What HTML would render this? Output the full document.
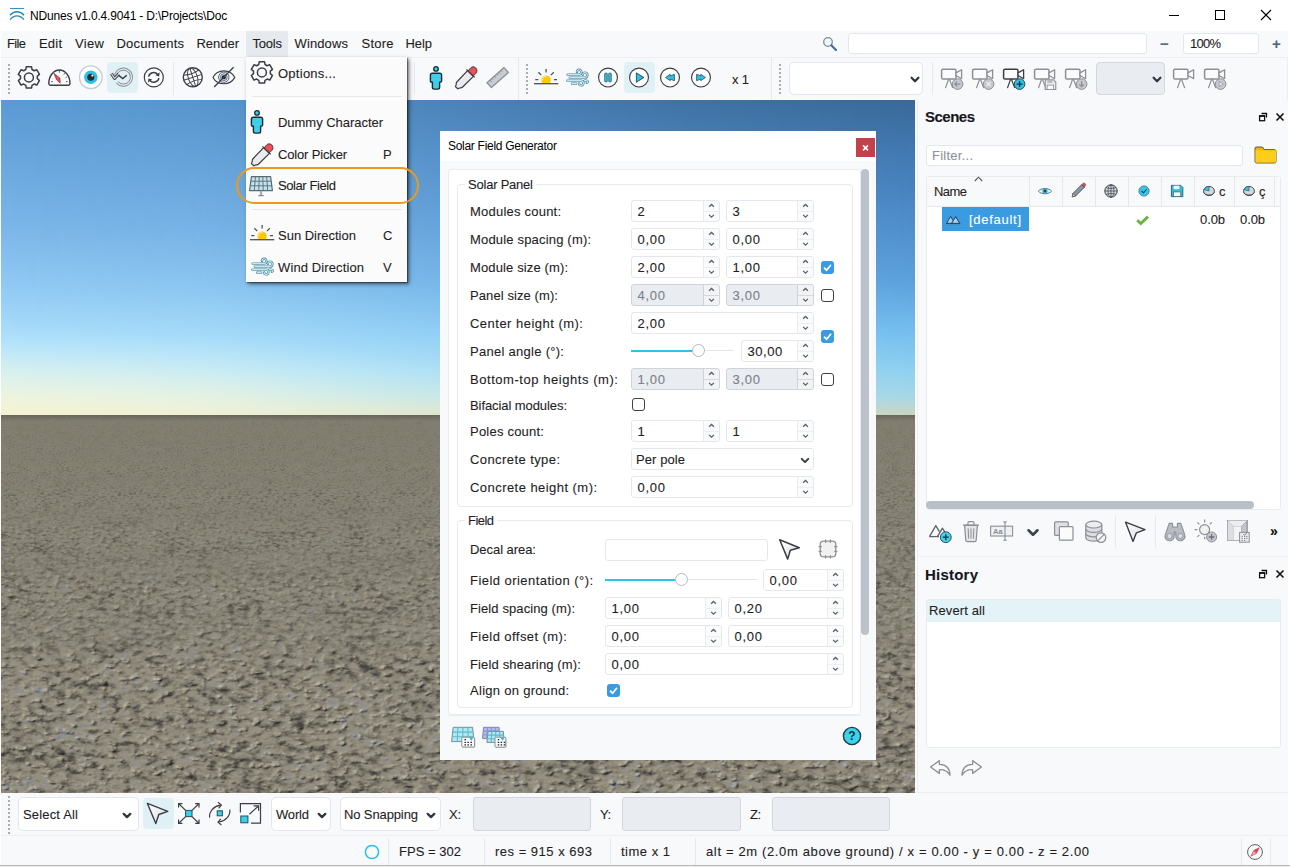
<!DOCTYPE html>
<html><head><meta charset="utf-8"><title>NDunes</title>
<style>
html,body{margin:0;padding:0;overflow:hidden;}
body{width:1290px;height:867px;position:relative;overflow:hidden;background:#ffffff;
  font-family:"Liberation Sans",sans-serif;font-size:13px;color:#1e1e24;}
.t{position:absolute;white-space:pre;line-height:20px;height:20px;-webkit-text-stroke:0.1px currentColor;}
.inp{position:absolute;box-sizing:border-box;background:#fff;border:1px solid #e4e7eb;border-radius:3px;}
.inp.dis{background:#e9ecf0;border-color:#cfd4da;}
.sep{position:absolute;width:1px;background:#e6e8ec;}
.dots{position:absolute;width:2px;background-image:repeating-linear-gradient(to bottom,#a9acb4 0,#a9acb4 2px,transparent 2px,transparent 4px);}
.inp.big{border-radius:5px;border-color:#e3e6ee;}

</style></head>
<body>
<div id="vp" style="position:absolute;left:1px;top:100px;width:914px;height:693px;overflow:hidden;background:#86bfee;">
<div style="position:absolute;left:0;top:0;width:914px;height:315px;background:linear-gradient(to bottom,#5b9ad3 0px,#69a7dd 60px,#7cb7e9 130px,#92cbf4 190px,#aee0fb 240px,#c8edf8 272px,#dff2e8 295px,#edf2d8 308px,#eeeed0 315px);"></div>
<div style="position:absolute;left:0;top:0;width:914px;height:315px;background:linear-gradient(to bottom,#396898 0px,#4178b0 50px,#4a86c3 100px,#5ba0dc 180px,#73bdee 230px,#8fd0f0 270px,#a8d7e4 298px,#c0d6cb 310px,#c8d4c0 315px);-webkit-mask-image:linear-gradient(to right,rgba(0,0,0,0) 0px,rgba(0,0,0,0.10) 200px,rgba(0,0,0,0.45) 440px,rgba(0,0,0,0.8) 680px,#000 914px);mask-image:linear-gradient(to right,rgba(0,0,0,0) 0px,rgba(0,0,0,0.10) 200px,rgba(0,0,0,0.45) 440px,rgba(0,0,0,0.8) 680px,#000 914px);"></div>
<div style="position:absolute;left:0;top:0;width:914px;height:315px;background:radial-gradient(ellipse 620px 95px at -50px 322px,rgba(248,243,210,0.85) 0%,rgba(242,245,222,0.45) 45%,rgba(232,245,238,0.15) 75%,rgba(225,244,245,0) 100%);"></div>
<div style="position:absolute;left:0;top:314.5px;width:914px;height:380px;background:linear-gradient(to bottom,#6f6d60 0px,#7b786a 6px,#807c6d 60px,#857f70 200px,#88806f 380px);"></div>
<svg style="position:absolute;left:0;top:314.5px;" width="914" height="8.0"><filter id="gf0" x="0" y="0" width="100%" height="100%" color-interpolation-filters="sRGB"><feTurbulence type="fractalNoise" baseFrequency="0.900 0.950" numOctaves="3" seed="7" result="t1"/><feComponentTransfer in="t1" result="bump"><feFuncA type="table" tableValues="0 0 0 0 0 0.03 0.14 0.42 0.78 1 1"/></feComponentTransfer><feDiffuseLighting in="bump" surfaceScale="0.02" diffuseConstant="1" lighting-color="#ffffff" result="lit"><feDistantLight azimuth="215" elevation="52"/></feDiffuseLighting><feColorMatrix in="t1" type="matrix" values="1 0 0 0 0  1 0 0 0 0  1 0 0 0 0  0 0 0 0 1" result="a"/><feTurbulence type="fractalNoise" baseFrequency="0.1800 0.1900" numOctaves="2" seed="40"/><feColorMatrix type="matrix" values="1 0 0 0 0  1 0 0 0 0  1 0 0 0 0  0 0 0 0 1" result="b"/><feComposite in="a" in2="b" operator="arithmetic" k1="0" k2="0.78" k3="0.36" k4="-0.07"/><feComponentTransfer result="col"><feFuncR type="table" tableValues="0.470 0.470 0.472 0.482 0.497 0.506 0.510 0.507 0.501 0.500 0.500"/><feFuncG type="table" tableValues="0.460 0.460 0.462 0.472 0.486 0.494 0.499 0.498 0.495 0.494 0.494"/><feFuncB type="table" tableValues="0.409 0.409 0.411 0.419 0.432 0.438 0.443 0.447 0.449 0.450 0.450"/></feComponentTransfer><feComposite in="col" in2="lit" operator="arithmetic" k1="1.27" k2="0" k3="0" k4="0"/></filter><rect width="914" height="8.0" filter="url(#gf0)"/></svg>
<svg style="position:absolute;left:0;top:317.0px;-webkit-mask-image:linear-gradient(to bottom,transparent 0%,#000 35.5%);mask-image:linear-gradient(to bottom,transparent 0%,#000 35.5%);" width="914" height="15.5"><filter id="gf1" x="0" y="0" width="100%" height="100%" color-interpolation-filters="sRGB"><feTurbulence type="fractalNoise" baseFrequency="0.900 0.950" numOctaves="3" seed="10" result="t1"/><feComponentTransfer in="t1" result="bump"><feFuncA type="table" tableValues="0 0 0 0 0 0.03 0.14 0.42 0.78 1 1"/></feComponentTransfer><feDiffuseLighting in="bump" surfaceScale="0.03" diffuseConstant="1" lighting-color="#ffffff" result="lit"><feDistantLight azimuth="215" elevation="52"/></feDiffuseLighting><feColorMatrix in="t1" type="matrix" values="1 0 0 0 0  1 0 0 0 0  1 0 0 0 0  0 0 0 0 1" result="a"/><feTurbulence type="fractalNoise" baseFrequency="0.1800 0.1900" numOctaves="2" seed="41"/><feColorMatrix type="matrix" values="1 0 0 0 0  1 0 0 0 0  1 0 0 0 0  0 0 0 0 1" result="b"/><feComposite in="a" in2="b" operator="arithmetic" k1="0" k2="0.78" k3="0.36" k4="-0.07"/><feComponentTransfer result="col"><feFuncR type="table" tableValues="0.458 0.458 0.462 0.475 0.495 0.507 0.513 0.509 0.501 0.499 0.499"/><feFuncG type="table" tableValues="0.449 0.449 0.452 0.465 0.484 0.496 0.501 0.500 0.496 0.496 0.496"/><feFuncB type="table" tableValues="0.399 0.399 0.402 0.414 0.431 0.439 0.445 0.451 0.453 0.456 0.456"/></feComponentTransfer><feComposite in="col" in2="lit" operator="arithmetic" k1="1.27" k2="0" k3="0" k4="0"/></filter><rect width="914" height="15.5" filter="url(#gf1)"/></svg>
<svg style="position:absolute;left:0;top:324.8px;-webkit-mask-image:linear-gradient(to bottom,transparent 0%,#000 35.5%);mask-image:linear-gradient(to bottom,transparent 0%,#000 35.5%);" width="914" height="21.7"><filter id="gf2" x="0" y="0" width="100%" height="100%" color-interpolation-filters="sRGB"><feTurbulence type="fractalNoise" baseFrequency="0.857 0.950" numOctaves="3" seed="13" result="t1"/><feComponentTransfer in="t1" result="bump"><feFuncA type="table" tableValues="0 0 0 0 0 0.03 0.14 0.42 0.78 1 1"/></feComponentTransfer><feDiffuseLighting in="bump" surfaceScale="0.03" diffuseConstant="1" lighting-color="#ffffff" result="lit"><feDistantLight azimuth="215" elevation="52"/></feDiffuseLighting><feColorMatrix in="t1" type="matrix" values="1 0 0 0 0  1 0 0 0 0  1 0 0 0 0  0 0 0 0 1" result="a"/><feTurbulence type="fractalNoise" baseFrequency="0.1714 0.1900" numOctaves="2" seed="42"/><feColorMatrix type="matrix" values="1 0 0 0 0  1 0 0 0 0  1 0 0 0 0  0 0 0 0 1" result="b"/><feComposite in="a" in2="b" operator="arithmetic" k1="0" k2="0.78" k3="0.36" k4="-0.07"/><feComponentTransfer result="col"><feFuncR type="table" tableValues="0.446 0.446 0.450 0.467 0.493 0.509 0.516 0.511 0.502 0.499 0.499"/><feFuncG type="table" tableValues="0.436 0.436 0.440 0.457 0.482 0.497 0.504 0.503 0.498 0.497 0.497"/><feFuncB type="table" tableValues="0.388 0.388 0.392 0.407 0.429 0.441 0.448 0.456 0.459 0.462 0.462"/></feComponentTransfer><feComposite in="col" in2="lit" operator="arithmetic" k1="1.27" k2="0" k3="0" k4="0"/></filter><rect width="914" height="21.7" filter="url(#gf2)"/></svg>
<svg style="position:absolute;left:0;top:335.5px;-webkit-mask-image:linear-gradient(to bottom,transparent 0%,#000 35.5%);mask-image:linear-gradient(to bottom,transparent 0%,#000 35.5%);" width="914" height="31.0"><filter id="gf3" x="0" y="0" width="100%" height="100%" color-interpolation-filters="sRGB"><feTurbulence type="fractalNoise" baseFrequency="0.577 0.950" numOctaves="3" seed="16" result="t1"/><feComponentTransfer in="t1" result="bump"><feFuncA type="table" tableValues="0 0 0 0 0 0.03 0.14 0.42 0.78 1 1"/></feComponentTransfer><feDiffuseLighting in="bump" surfaceScale="0.06" diffuseConstant="1" lighting-color="#ffffff" result="lit"><feDistantLight azimuth="215" elevation="52"/></feDiffuseLighting><feColorMatrix in="t1" type="matrix" values="1 0 0 0 0  1 0 0 0 0  1 0 0 0 0  0 0 0 0 1" result="a"/><feTurbulence type="fractalNoise" baseFrequency="0.1154 0.1900" numOctaves="2" seed="43"/><feColorMatrix type="matrix" values="1 0 0 0 0  1 0 0 0 0  1 0 0 0 0  0 0 0 0 1" result="b"/><feComposite in="a" in2="b" operator="arithmetic" k1="0" k2="0.78" k3="0.36" k4="-0.07"/><feComponentTransfer result="col"><feFuncR type="table" tableValues="0.431 0.431 0.436 0.458 0.492 0.512 0.521 0.515 0.502 0.498 0.498"/><feFuncG type="table" tableValues="0.421 0.421 0.426 0.448 0.480 0.499 0.509 0.507 0.501 0.499 0.499"/><feFuncB type="table" tableValues="0.375 0.375 0.380 0.399 0.428 0.443 0.452 0.462 0.466 0.470 0.470"/></feComponentTransfer><feComposite in="col" in2="lit" operator="arithmetic" k1="1.27" k2="0" k3="0" k4="0"/></filter><rect width="914" height="31.0" filter="url(#gf3)"/></svg>
<svg style="position:absolute;left:0;top:351.1px;-webkit-mask-image:linear-gradient(to bottom,transparent 0%,#000 35.5%);mask-image:linear-gradient(to bottom,transparent 0%,#000 35.5%);" width="914" height="43.4"><filter id="gf4" x="0" y="0" width="100%" height="100%" color-interpolation-filters="sRGB"><feTurbulence type="fractalNoise" baseFrequency="0.395 0.931" numOctaves="3" seed="19" result="t1"/><feComponentTransfer in="t1" result="bump"><feFuncA type="table" tableValues="0 0 0 0 0 0.03 0.14 0.42 0.78 1 1"/></feComponentTransfer><feDiffuseLighting in="bump" surfaceScale="0.10" diffuseConstant="1" lighting-color="#ffffff" result="lit"><feDistantLight azimuth="215" elevation="52"/></feDiffuseLighting><feColorMatrix in="t1" type="matrix" values="1 0 0 0 0  1 0 0 0 0  1 0 0 0 0  0 0 0 0 1" result="a"/><feTurbulence type="fractalNoise" baseFrequency="0.0789 0.1863" numOctaves="2" seed="44"/><feColorMatrix type="matrix" values="1 0 0 0 0  1 0 0 0 0  1 0 0 0 0  0 0 0 0 1" result="b"/><feComposite in="a" in2="b" operator="arithmetic" k1="0" k2="0.78" k3="0.36" k4="-0.07"/><feComponentTransfer result="col"><feFuncR type="table" tableValues="0.411 0.411 0.418 0.446 0.490 0.516 0.528 0.519 0.504 0.498 0.498"/><feFuncG type="table" tableValues="0.401 0.401 0.408 0.436 0.478 0.502 0.514 0.513 0.504 0.502 0.502"/><feFuncB type="table" tableValues="0.358 0.358 0.365 0.390 0.426 0.445 0.458 0.470 0.475 0.480 0.480"/></feComponentTransfer><feComposite in="col" in2="lit" operator="arithmetic" k1="1.27" k2="0" k3="0" k4="0"/></filter><rect width="914" height="43.4" filter="url(#gf4)"/></svg>
<svg style="position:absolute;left:0;top:372.5px;-webkit-mask-image:linear-gradient(to bottom,transparent 0%,#000 35.5%);mask-image:linear-gradient(to bottom,transparent 0%,#000 35.5%);" width="914" height="62.0"><filter id="gf5" x="0" y="0" width="100%" height="100%" color-interpolation-filters="sRGB"><feTurbulence type="fractalNoise" baseFrequency="0.273 0.595" numOctaves="3" seed="22" result="t1"/><feComponentTransfer in="t1" result="bump"><feFuncA type="table" tableValues="0 0 0 0 0 0.03 0.14 0.42 0.78 1 1"/></feComponentTransfer><feDiffuseLighting in="bump" surfaceScale="0.18" diffuseConstant="1" lighting-color="#ffffff" result="lit"><feDistantLight azimuth="215" elevation="52"/></feDiffuseLighting><feColorMatrix in="t1" type="matrix" values="1 0 0 0 0  1 0 0 0 0  1 0 0 0 0  0 0 0 0 1" result="a"/><feTurbulence type="fractalNoise" baseFrequency="0.0545 0.1189" numOctaves="2" seed="45"/><feColorMatrix type="matrix" values="1 0 0 0 0  1 0 0 0 0  1 0 0 0 0  0 0 0 0 1" result="b"/><feComposite in="a" in2="b" operator="arithmetic" k1="0" k2="0.78" k3="0.36" k4="-0.07"/><feComponentTransfer result="col"><feFuncR type="table" tableValues="0.386 0.386 0.395 0.431 0.487 0.521 0.537 0.526 0.505 0.499 0.499"/><feFuncG type="table" tableValues="0.376 0.376 0.385 0.421 0.475 0.506 0.522 0.520 0.509 0.506 0.506"/><feFuncB type="table" tableValues="0.337 0.337 0.346 0.377 0.424 0.449 0.465 0.481 0.488 0.494 0.494"/></feComponentTransfer><feComposite in="col" in2="lit" operator="arithmetic" k1="1.27" k2="0" k3="0" k4="0"/></filter><rect width="914" height="62.0" filter="url(#gf5)"/></svg>
<svg style="position:absolute;left:0;top:404.2px;-webkit-mask-image:linear-gradient(to bottom,transparent 0%,#000 35.5%);mask-image:linear-gradient(to bottom,transparent 0%,#000 35.5%);" width="914" height="85.2"><filter id="gf6" x="0" y="0" width="100%" height="100%" color-interpolation-filters="sRGB"><feTurbulence type="fractalNoise" baseFrequency="0.190 0.390" numOctaves="3" seed="25" result="t1"/><feComponentTransfer in="t1" result="bump"><feFuncA type="table" tableValues="0 0 0 0 0 0.03 0.14 0.42 0.78 1 1"/></feComponentTransfer><feDiffuseLighting in="bump" surfaceScale="0.32" diffuseConstant="1" lighting-color="#ffffff" result="lit"><feDistantLight azimuth="215" elevation="52"/></feDiffuseLighting><feColorMatrix in="t1" type="matrix" values="1 0 0 0 0  1 0 0 0 0  1 0 0 0 0  0 0 0 0 1" result="a"/><feTurbulence type="fractalNoise" baseFrequency="0.0381 0.0780" numOctaves="2" seed="46"/><feColorMatrix type="matrix" values="1 0 0 0 0  1 0 0 0 0  1 0 0 0 0  0 0 0 0 1" result="b"/><feComposite in="a" in2="b" operator="arithmetic" k1="0" k2="0.78" k3="0.36" k4="-0.07"/><feComponentTransfer result="col"><feFuncR type="table" tableValues="0.355 0.355 0.366 0.413 0.485 0.529 0.549 0.535 0.509 0.500 0.500"/><feFuncG type="table" tableValues="0.344 0.344 0.356 0.402 0.472 0.512 0.533 0.530 0.515 0.512 0.512"/><feFuncB type="table" tableValues="0.309 0.309 0.321 0.362 0.423 0.455 0.475 0.495 0.504 0.513 0.513"/></feComponentTransfer><feComposite in="col" in2="lit" operator="arithmetic" k1="1.27" k2="0" k3="0" k4="0"/></filter><rect width="914" height="85.2" filter="url(#gf6)"/></svg>
<svg style="position:absolute;left:0;top:445.5px;-webkit-mask-image:linear-gradient(to bottom,transparent 0%,#000 35.5%);mask-image:linear-gradient(to bottom,transparent 0%,#000 35.5%);" width="914" height="124.0"><filter id="gf7" x="0" y="0" width="100%" height="100%" color-interpolation-filters="sRGB"><feTurbulence type="fractalNoise" baseFrequency="0.133 0.260" numOctaves="3" seed="28" result="t1"/><feComponentTransfer in="t1" result="bump"><feFuncA type="table" tableValues="0 0 0 0 0 0.03 0.14 0.42 0.78 1 1"/></feComponentTransfer><feDiffuseLighting in="bump" surfaceScale="0.59" diffuseConstant="1" lighting-color="#ffffff" result="lit"><feDistantLight azimuth="215" elevation="52"/></feDiffuseLighting><feColorMatrix in="t1" type="matrix" values="1 0 0 0 0  1 0 0 0 0  1 0 0 0 0  0 0 0 0 1" result="a"/><feTurbulence type="fractalNoise" baseFrequency="0.0267 0.0520" numOctaves="2" seed="47"/><feColorMatrix type="matrix" values="1 0 0 0 0  1 0 0 0 0  1 0 0 0 0  0 0 0 0 1" result="b"/><feComposite in="a" in2="b" operator="arithmetic" k1="0" k2="0.78" k3="0.36" k4="-0.07"/><feComponentTransfer result="col"><feFuncR type="table" tableValues="0.314 0.314 0.329 0.389 0.483 0.540 0.566 0.547 0.514 0.502 0.502"/><feFuncG type="table" tableValues="0.303 0.303 0.318 0.378 0.468 0.521 0.547 0.543 0.525 0.521 0.521"/><feFuncB type="table" tableValues="0.274 0.274 0.289 0.342 0.421 0.462 0.489 0.515 0.526 0.537 0.537"/></feComponentTransfer><feComposite in="col" in2="lit" operator="arithmetic" k1="1.27" k2="0" k3="0" k4="0"/></filter><rect width="914" height="124.0" filter="url(#gf7)"/></svg>
<svg style="position:absolute;left:0;top:500.8px;-webkit-mask-image:linear-gradient(to bottom,transparent 0%,#000 35.5%);mask-image:linear-gradient(to bottom,transparent 0%,#000 35.5%);" width="914" height="193.8"><filter id="gf8" x="0" y="0" width="100%" height="100%" color-interpolation-filters="sRGB"><feTurbulence type="fractalNoise" baseFrequency="0.092 0.172" numOctaves="3" seed="31" result="t1"/><feComponentTransfer in="t1" result="bump"><feFuncA type="table" tableValues="0 0 0 0 0 0.03 0.14 0.42 0.78 1 1"/></feComponentTransfer><feDiffuseLighting in="bump" surfaceScale="1.12" diffuseConstant="1" lighting-color="#ffffff" result="lit"><feDistantLight azimuth="215" elevation="52"/></feDiffuseLighting><feColorMatrix in="t1" type="matrix" values="1 0 0 0 0  1 0 0 0 0  1 0 0 0 0  0 0 0 0 1" result="a"/><feTurbulence type="fractalNoise" baseFrequency="0.0183 0.0344" numOctaves="2" seed="48"/><feColorMatrix type="matrix" values="1 0 0 0 0  1 0 0 0 0  1 0 0 0 0  0 0 0 0 1" result="b"/><feComposite in="a" in2="b" operator="arithmetic" k1="0" k2="0.78" k3="0.36" k4="-0.07"/><feComponentTransfer result="col"><feFuncR type="table" tableValues="0.258 0.258 0.278 0.358 0.482 0.557 0.591 0.567 0.522 0.507 0.507"/><feFuncG type="table" tableValues="0.245 0.245 0.265 0.345 0.464 0.534 0.568 0.564 0.539 0.534 0.534"/><feFuncB type="table" tableValues="0.225 0.225 0.245 0.315 0.419 0.474 0.509 0.543 0.558 0.573 0.573"/></feComponentTransfer><feComposite in="col" in2="lit" operator="arithmetic" k1="1.27" k2="0" k3="0" k4="0"/></filter><rect width="914" height="193.8" filter="url(#gf8)"/></svg>
<div style="position:absolute;left:0;top:314.5px;width:914px;height:6px;background:linear-gradient(to bottom,rgba(70,68,58,0.42),rgba(70,68,58,0));"></div>
</div>
<div style="position:absolute;left:0px;top:0px;width:1290px;height:31px;background:#fff;"></div>
<svg style="position:absolute;left:9px;top:7px;" width="16" height="14" viewBox="0 0 16 14"><path d="M1 1.5H15" stroke="#3b8fb8" stroke-width="1.1" fill="none"/><path d="M1 8.2C5 3.6 11 3.6 15 8.2" stroke="#2e86b5" stroke-width="1.3" fill="none"/><path d="M1 12.6C5 7.6 11 7.6 15 12.6" stroke="#2e86b5" stroke-width="1.3" fill="none"/></svg>
<span class="t" style="left:30px;top:5.5px;font-size:12px;letter-spacing:-0.18px;color:#000;-webkit-text-stroke:0;">NDunes v1.0.4.9041 - D:\Projects\Doc</span>
<svg style="position:absolute;left:1168px;top:9px;" width="12" height="12" viewBox="0 0 12 12"><path d="M1 6.5H11" stroke="#000" stroke-width="1"/></svg>
<svg style="position:absolute;left:1214px;top:9px;" width="12" height="12" viewBox="0 0 12 12"><rect x="1.5" y="1.5" width="9" height="9" fill="none" stroke="#000" stroke-width="1"/></svg>
<svg style="position:absolute;left:1260px;top:9px;" width="12" height="12" viewBox="0 0 12 12"><path d="M1 1L11 11M11 1L1 11" stroke="#000" stroke-width="1.1"/></svg>
<div style="position:absolute;left:0px;top:31px;width:1290px;height:26px;background:#f8f9fa;"></div>
<div style="position:absolute;left:246px;top:31px;width:42px;height:26px;background:#e6eaef;"></div>
<span class="t" style="left:7px;top:34.0px;font-size:13px;letter-spacing:-0.65px;color:#1e1e24;">File</span>
<span class="t" style="left:39px;top:34.0px;font-size:13px;letter-spacing:0.20px;color:#1e1e24;">Edit</span>
<span class="t" style="left:75px;top:34.0px;font-size:13px;letter-spacing:0.35px;color:#1e1e24;">View</span>
<span class="t" style="left:116.5px;top:34.0px;font-size:13px;letter-spacing:0.22px;color:#1e1e24;">Documents</span>
<span class="t" style="left:196.5px;top:34.0px;font-size:13px;letter-spacing:-0.03px;color:#1e1e24;">Render</span>
<span class="t" style="left:252.5px;top:34.0px;font-size:13px;letter-spacing:-0.21px;color:#1e1e24;">Tools</span>
<span class="t" style="left:294.5px;top:34.0px;font-size:13px;letter-spacing:0.12px;color:#1e1e24;">Windows</span>
<span class="t" style="left:361.5px;top:34.0px;font-size:13px;letter-spacing:0.23px;color:#1e1e24;">Store</span>
<span class="t" style="left:405.5px;top:34.0px;font-size:13px;letter-spacing:-0.08px;color:#1e1e24;">Help</span>
<svg style="position:absolute;left:821px;top:35px;" width="18" height="18" viewBox="0 0 18 18"><circle cx="7" cy="7" r="4.3" fill="#eef6fb" stroke="#7d8a99" stroke-width="1.3"/><path d="M10.3 10.3L15 15" stroke="#3f6f9c" stroke-width="2.2" stroke-linecap="round"/></svg>
<div class="inp" style="position:absolute;left:848px;top:33px;width:299px;height:21px;"></div>
<span class="t" style="left:1160px;top:33.5px;font-size:15px;letter-spacing:0.00px;color:#5b6778;font-weight:bold;">−</span>
<div class="inp" style="position:absolute;left:1183px;top:33px;width:76px;height:21px;"></div>
<span class="t" style="left:1190px;top:34.0px;font-size:13px;letter-spacing:-0.76px;color:#1e1e24;">100%</span>
<span class="t" style="left:1272px;top:33.5px;font-size:15px;letter-spacing:0.00px;color:#4e6584;font-weight:bold;">+</span>
<div style="position:absolute;left:0px;top:57px;width:1290px;height:43px;background:#f8f9fa;border-top:1px solid #eceef1;box-sizing:border-box;"></div>
<div class="dots" style="position:absolute;left:8px;top:64px;width:2px;height:30px;"></div>
<div style="position:absolute;left:107px;top:62px;width:31px;height:31px;background:#e0f1f6;border-radius:4px;"></div>
<svg style="position:absolute;left:12.0px;top:61.0px;overflow:visible" width="32" height="32" viewBox="0 0 32 32"><g transform="translate(0.9 0.4)"><path d="M12.89 8.09L13.39 5.32L18.61 5.32L19.11 8.09L21.29 9.35L23.95 8.39L26.56 12.92L24.41 14.74L24.41 17.26L26.56 19.08L23.95 23.61L21.29 22.65L19.11 23.91L18.61 26.68L13.39 26.68L12.89 23.91L10.71 22.65L8.05 23.61L5.44 19.08L7.59 17.26L7.59 14.74L5.44 12.92L8.05 8.39L10.71 9.35Z" fill="none" stroke="#3a3e47" stroke-width="1.5" stroke-linejoin="round"/><circle cx="16" cy="16" r="4.5" fill="none" stroke="#3a3e47" stroke-width="1.5"/></g></svg>
<svg style="position:absolute;left:43.0px;top:61.0px;overflow:visible" width="32" height="32" viewBox="0 0 32 32"><path d="M7.4 24.2C6.4 24.2 5.8 23.6 5.8 22.6C5.8 15 10.4 9 16.4 9C22.4 9 27 15 27 22.6C27 23.6 26.4 24.2 25.4 24.2Z" fill="#fbfbfb" stroke="#3a3e47" stroke-width="1.4" stroke-linejoin="round"/><path d="M10.8 12.2L13.6 18.8L17.2 22.2L17 17.2Z" fill="#ee4a52" stroke="#5a2a30" stroke-width="0.6" stroke-linejoin="round"/><path d="M16.4 9.8V11.6M8.2 20.6H9.8M24.6 20.6H23M21.6 12.2L20.8 13.6M23.8 16L22.6 16.8" stroke="#3a3e47" stroke-width="0.9"/></svg>
<svg style="position:absolute;left:74.0px;top:61.0px;overflow:visible" width="32" height="32" viewBox="0 0 32 32"><circle cx="16.8" cy="16.2" r="11.3" fill="#fff" stroke="#c6c9d6" stroke-width="1.3"/><circle cx="16.8" cy="16.2" r="6.7" fill="#2cc3e4"/><circle cx="16.8" cy="16.2" r="3.5" fill="#2a2c33"/><circle cx="18.4" cy="14.6" r="1.05" fill="#fff"/></svg>
<svg style="position:absolute;left:106.0px;top:61.0px;overflow:visible" width="32" height="32" viewBox="0 0 32 32"><path d="M9.6 14.4A8 8 0 1 1 11.2 21.2" fill="none" stroke="#8b8f97" stroke-width="3.1"/><path d="M9.6 14.4A8 8 0 1 1 11.2 21.2" fill="none" stroke="#e6e8eb" stroke-width="1.2"/><path d="M12.6 14.4L16.8 17.6L20.8 14.2" fill="none" stroke="#3a3e47" stroke-width="1.5"/><path d="M5.4 12.6L8.6 17.4L12.6 13" fill="none" stroke="#3a3e47" stroke-width="3" stroke-linejoin="round"/><path d="M5.4 12.6L8.6 17.4L12.6 13" fill="none" stroke="#dfe1e5" stroke-width="1.1" stroke-linejoin="round"/></svg>
<svg style="position:absolute;left:137.0px;top:61.0px;overflow:visible" width="32" height="32" viewBox="0 0 32 32"><circle cx="16.8" cy="16.4" r="9.5" fill="#fdfdfd" stroke="#3a3e47" stroke-width="1.2"/><path d="M11.6 15.6A5.2 5.2 0 0 1 20.6 13.4" fill="none" stroke="#3a3e47" stroke-width="1.5"/><path d="M22 17.2A5.2 5.2 0 0 1 13 19.4" fill="none" stroke="#3a3e47" stroke-width="1.5"/><path d="M22.6 11.2L22.2 15.4L18.4 14.2Z" fill="#3a3e47"/><path d="M11 21.6L11.4 17.4L15.2 18.6Z" fill="#3a3e47"/></svg>
<div class="sep" style="left:173px;top:62px;height:33px;"></div>
<svg style="position:absolute;left:176.0px;top:61.0px;overflow:visible" width="32" height="32" viewBox="0 0 32 32"><circle cx="16.8" cy="16.3" r="9.5" fill="#fbfbfb" stroke="#3a3e47" stroke-width="1.4"/><g transform="rotate(-18 16.8 16.3)"><ellipse cx="16.8" cy="16.3" rx="4.6" ry="9.5" fill="none" stroke="#3a3e47" stroke-width="0.95"/><path d="M16.8 6.8V25.8M7.3 16.3H26.3M8.8 11.2C13 13 20.6 13 24.8 11.2M8.8 21.4C13 19.6 20.6 19.6 24.8 21.4" fill="none" stroke="#3a3e47" stroke-width="0.95"/></g></svg>
<svg style="position:absolute;left:207.0px;top:61.0px;overflow:visible" width="32" height="32" viewBox="0 0 32 32"><path d="M6 16.4C10.4 7.6 23.2 7.6 27.8 16.4C23.2 24.8 10.4 24.8 6 16.4Z" fill="#fbfbfb" stroke="#3a3e47" stroke-width="1.15"/><circle cx="16.8" cy="16.2" r="5.2" fill="#f1f2f5" stroke="#5a6072" stroke-width="1"/><circle cx="16.8" cy="16.2" r="3.4" fill="#cfd3dd" stroke="#5a6072" stroke-width="0.8"/><circle cx="16.8" cy="16.2" r="2" fill="#15182a"/><path d="M7.2 26L26.6 6.2" stroke="#3a3e47" stroke-width="1.3"/></svg>
<div class="sep" style="left:414px;top:62px;height:33px;"></div>
<svg style="position:absolute;left:420.0px;top:61.0px;overflow:visible" width="32" height="32" viewBox="0 0 32 32"><g transform="translate(0 1.3)"><circle cx="16" cy="6.6" r="2.3" fill="#3ecfe9" stroke="#1d2a33" stroke-width="1.3"/><path d="M10.4 12.8C10.4 11.6 11.2 10.9 12.4 10.9H19.6C20.8 10.9 21.6 11.6 21.6 12.8V18.6C21.6 19.6 20.8 20 19.6 20V25C19.6 26.2 18.8 26.8 17.8 26.8H14.2C13.2 26.8 12.4 26.2 12.4 25V20C11.2 20 10.4 19.6 10.4 18.6Z" fill="#3ecfe9" stroke="#1d2a33" stroke-width="1.4" stroke-linejoin="round"/></g></svg>
<svg style="position:absolute;left:450.0px;top:61.0px;overflow:visible" width="32" height="32" viewBox="0 0 32 32"><g transform="translate(0 1)"><path d="M17.6 8.6L23.4 14.4L12.4 25.2C11.4 26.2 9.4 25.4 7.8 26.8L5.4 24.6C6.8 22.8 5.8 21 6.8 20Z" fill="#e9ebef" stroke="#3a3e47" stroke-width="1.2" stroke-linejoin="round"/><path d="M18 9.2L23 14.2L25.8 11.4C27.4 9.8 27.2 7.4 25.8 6C24.4 4.6 22 4.4 20.6 6Z" fill="#ee5058" stroke="#4a3136" stroke-width="1" stroke-linejoin="round"/><path d="M16.4 7.4L24.8 15.4" stroke="#3a3e47" stroke-width="1.2"/></g></svg>
<svg style="position:absolute;left:481.0px;top:61.0px;overflow:visible" width="32" height="32" viewBox="0 0 32 32"><g transform="translate(0.6 0.6)"><path d="M5.4 21.2L22.4 6L26.8 10.8L9.8 26Z" fill="#c9ccd2" stroke="#8b8f97" stroke-width="1.3" stroke-linejoin="round"/><path d="M8.6 18.6L10.2 20.4M10.8 16.6L12 18M13 14.6L14.6 16.4M15.2 12.6L16.4 14M17.4 10.8L19 12.6M19.6 8.8L20.8 10.2" stroke="#8b8f97" stroke-width="0.9"/></g></svg>
<div class="sep" style="left:518px;top:58px;height:42px;"></div>
<div class="dots" style="position:absolute;left:526px;top:64px;width:2px;height:30px;"></div>
<svg style="position:absolute;left:530.0px;top:61.0px;overflow:visible" width="32" height="32" viewBox="0 0 32 32"><clipPath id="sunclip1"><rect x="0" y="0" width="32" height="21.9"/></clipPath><circle cx="16.1" cy="19.1" r="4.7" fill="#ffc800" clip-path="url(#sunclip1)"/><path d="M12.6 19.6A3.6 3.6 0 0 1 16.6 15.4" fill="none" stroke="#ffe27a" stroke-width="1.1" clip-path="url(#sunclip1)"/><path d="M4 22.7H28.3" stroke="#4c5059" stroke-width="1.3"/><path d="M16.1 8V11.6M8.4 11.3L11.3 14.1M23.8 11.3L20.9 14.1M5.3 18.7H8.4M23.9 18.7H27" stroke="#4c5059" stroke-width="1.3"/></svg>
<svg style="position:absolute;left:561.0px;top:61.0px;overflow:visible" width="32" height="32" viewBox="0 0 32 32"><path d="M6.6 13.6H17.8C21 13.6 21.2 8.8 18.2 8.8C16.6 8.8 15.8 10 16 11M8.8 16.6H23.6C27.2 16.6 27.2 11.6 24 11.6C22.4 11.6 21.6 12.8 21.8 13.8M6.4 19.6H20C23.2 19.6 23.2 24.4 20.2 24.4C18.6 24.4 18 23.4 18.2 22.4M11 22.6H15.2M23.4 19.6H25.4C27 19.6 27.2 21.6 25.8 21.8" fill="none" stroke="#4f8298" stroke-width="2.4" stroke-linecap="round"/><path d="M6.6 13.6H17.8C21 13.6 21.2 8.8 18.2 8.8C16.6 8.8 15.8 10 16 11M8.8 16.6H23.6C27.2 16.6 27.2 11.6 24 11.6C22.4 11.6 21.6 12.8 21.8 13.8M6.4 19.6H20C23.2 19.6 23.2 24.4 20.2 24.4C18.6 24.4 18 23.4 18.2 22.4M11 22.6H15.2M23.4 19.6H25.4C27 19.6 27.2 21.6 25.8 21.8" fill="none" stroke="#bfeaf4" stroke-width="1.1" stroke-linecap="round"/></svg>
<svg style="position:absolute;left:591.0px;top:61.0px;overflow:visible" width="32" height="32" viewBox="0 0 32 32"><g transform="translate(1 0.5)"><circle cx="16" cy="16" r="9.45" fill="#fdfdfd" stroke="#3a3e47" stroke-width="1.15"/><rect x="12.7" y="11.6" width="2.6" height="8.8" rx="0.8" fill="#2cc3e4" stroke="#34606f" stroke-width="0.8"/><rect x="16.7" y="11.6" width="2.6" height="8.8" rx="0.8" fill="#2cc3e4" stroke="#34606f" stroke-width="0.8"/></g></svg>
<div style="position:absolute;left:624px;top:62px;width:31px;height:31px;background:#e0f1f6;border-radius:4px;"></div>
<svg style="position:absolute;left:622.0px;top:61.0px;overflow:visible" width="32" height="32" viewBox="0 0 32 32"><g transform="translate(1 0.5)"><circle cx="16" cy="16" r="9.45" fill="#fdfdfd" stroke="#3a3e47" stroke-width="1.15"/><path d="M13.4 11.4L20.6 16L13.4 20.6Z" fill="#2cc3e4" stroke="#2f5f70" stroke-width="1.05" stroke-linejoin="round"/></g></svg>
<svg style="position:absolute;left:653.0px;top:61.0px;overflow:visible" width="32" height="32" viewBox="0 0 32 32"><g transform="translate(1 0.5)"><circle cx="16" cy="16" r="9.45" fill="#fdfdfd" stroke="#3a3e47" stroke-width="1.15"/><path d="M16.2 12.8L11.6 16L16.2 19.2V17.6L20.4 19.2V12.8L16.2 14.4Z" fill="#2cc3e4" stroke="#2f5f70" stroke-width="0.9" stroke-linejoin="round"/></g></svg>
<svg style="position:absolute;left:684.0px;top:61.0px;overflow:visible" width="32" height="32" viewBox="0 0 32 32"><g transform="translate(1 0.5)"><circle cx="16" cy="16" r="9.45" fill="#fdfdfd" stroke="#3a3e47" stroke-width="1.15"/><path d="M15.8 12.8L20.4 16L15.8 19.2V17.6L11.6 19.2V12.8L15.8 14.4Z" fill="#2cc3e4" stroke="#2f5f70" stroke-width="0.9" stroke-linejoin="round"/></g></svg>
<span class="t" style="left:732px;top:69.5px;font-size:13px;letter-spacing:-0.17px;color:#1e1e24;">x 1</span>
<div class="sep" style="left:771px;top:58px;height:42px;"></div>
<div class="dots" style="position:absolute;left:779px;top:64px;width:2px;height:30px;"></div>
<div class="inp big" style="position:absolute;left:789px;top:62px;width:134px;height:33px;"></div>
<svg style="position:absolute;left:907px;top:71px" width="16" height="16" viewBox="0 0 16 16"><path d="M4.6 6.8L8 10.2L11.4 6.8" fill="none" stroke="#33363f" stroke-width="2.30" stroke-linecap="round" stroke-linejoin="round"/></svg>
<div class="sep" style="left:932px;top:62px;height:33px;"></div>
<svg style="position:absolute;left:936.0px;top:61.0px;overflow:visible" width="32" height="32" viewBox="0 0 32 32"><g transform="translate(0 1.5)"><rect x="5.6" y="6.8" width="14.4" height="9.8" rx="1.4" fill="#fbfbfb" stroke="#8b8f97" stroke-width="1.5"/><path d="M20 10.4L25.6 7.2V16.2L20 13Z" fill="#fbfbfb" stroke="#8b8f97" stroke-width="1.3" stroke-linejoin="round"/><path d="M12.6 16.8L9.4 25.6M13.4 16.8L16.8 25.6" stroke="#8b8f97" stroke-width="1.2"/><circle cx="21.6" cy="21.6" r="5.3" fill="#c7c9ce" stroke="#8b8f97" stroke-width="1"/><path d="M24.4 21.6H19.2M21.2 19.2L18.8 21.6L21.2 24" fill="none" stroke="#8b8f97" stroke-width="1.2"/></g></svg>
<svg style="position:absolute;left:967.0px;top:61.0px;overflow:visible" width="32" height="32" viewBox="0 0 32 32"><g transform="translate(0 1.5)"><rect x="5.6" y="6.8" width="14.4" height="9.8" rx="1.4" fill="#fbfbfb" stroke="#8b8f97" stroke-width="1.5"/><path d="M20 10.4L25.6 7.2V16.2L20 13Z" fill="#fbfbfb" stroke="#8b8f97" stroke-width="1.3" stroke-linejoin="round"/><path d="M12.6 16.8L9.4 25.6M13.4 16.8L16.8 25.6" stroke="#8b8f97" stroke-width="1.2"/><circle cx="21.6" cy="21.6" r="5.3" fill="#c7c9ce" stroke="#8b8f97" stroke-width="1"/><path d="M19.6 19.6L23.6 23.6M23.6 19.6L19.6 23.6" stroke="#ececee" stroke-width="1.4"/></g></svg>
<svg style="position:absolute;left:998.0px;top:61.0px;overflow:visible" width="32" height="32" viewBox="0 0 32 32"><g transform="translate(0 1.5)"><rect x="5.6" y="6.8" width="14.4" height="9.8" rx="1.4" fill="#fbfbfb" stroke="#3a3e47" stroke-width="1.5"/><path d="M20 10.4L25.6 7.2V16.2L20 13Z" fill="#fbfbfb" stroke="#3a3e47" stroke-width="1.3" stroke-linejoin="round"/><path d="M12.6 16.8L9.4 25.6M13.4 16.8L16.8 25.6" stroke="#3a3e47" stroke-width="1.2"/><circle cx="21.6" cy="21.6" r="5.3" fill="#2cc3e4" stroke="#2b4c58" stroke-width="1"/><path d="M21.6 18.6V24.6M18.6 21.6H24.6" stroke="#16333d" stroke-width="1.4"/></g></svg>
<svg style="position:absolute;left:1029.0px;top:61.0px;overflow:visible" width="32" height="32" viewBox="0 0 32 32"><g transform="translate(0 1.5)"><rect x="5.6" y="6.8" width="14.4" height="9.8" rx="1.4" fill="#fbfbfb" stroke="#8b8f97" stroke-width="1.5"/><path d="M20 10.4L25.6 7.2V16.2L20 13Z" fill="#fbfbfb" stroke="#8b8f97" stroke-width="1.3" stroke-linejoin="round"/><path d="M12.6 16.8L9.4 25.6M13.4 16.8L16.8 25.6" stroke="#8b8f97" stroke-width="1.2"/><path d="M16.2 17.2H24.4L26.8 19.6V27H16.2Z" fill="#e9eaec" stroke="#8b8f97" stroke-width="1.1"/><rect x="18.4" y="17.4" width="5" height="3" fill="#b5b8be"/><rect x="18.2" y="22.6" width="6.4" height="4.4" fill="#fbfbfb" stroke="#8b8f97" stroke-width="0.8"/></g></svg>
<svg style="position:absolute;left:1060.0px;top:61.0px;overflow:visible" width="32" height="32" viewBox="0 0 32 32"><g transform="translate(0 1.5)"><rect x="5.6" y="6.8" width="14.4" height="9.8" rx="1.4" fill="#fbfbfb" stroke="#8b8f97" stroke-width="1.5"/><path d="M20 10.4L25.6 7.2V16.2L20 13Z" fill="#fbfbfb" stroke="#8b8f97" stroke-width="1.3" stroke-linejoin="round"/><path d="M12.6 16.8L9.4 25.6M13.4 16.8L16.8 25.6" stroke="#8b8f97" stroke-width="1.2"/><circle cx="21.6" cy="21.6" r="5.3" fill="#c7c9ce" stroke="#8b8f97" stroke-width="1"/><path d="M21.6 18.6V24M19.2 21.8L21.6 24.2L24 21.8" fill="none" stroke="#8b8f97" stroke-width="1.2"/></g></svg>
<div class="inp" style="position:absolute;left:1096px;top:62px;width:69px;height:33px;background:#e9ecf0;border-color:#d3d7dd;border-radius:4px;"></div>
<svg style="position:absolute;left:1149px;top:71px" width="16" height="16" viewBox="0 0 16 16"><path d="M4.6 6.8L8 10.2L11.4 6.8" fill="none" stroke="#33363f" stroke-width="2.30" stroke-linecap="round" stroke-linejoin="round"/></svg>
<svg style="position:absolute;left:1168.0px;top:61.0px;overflow:visible" width="32" height="32" viewBox="0 0 32 32"><g transform="translate(0 1.5)"><rect x="5.6" y="6.8" width="14.4" height="9.8" rx="1.4" fill="#fbfbfb" stroke="#8b8f97" stroke-width="1.5"/><path d="M20 10.4L25.6 7.2V16.2L20 13Z" fill="#fbfbfb" stroke="#8b8f97" stroke-width="1.3" stroke-linejoin="round"/><path d="M12.6 16.8L9.4 25.6M13.4 16.8L16.8 25.6" stroke="#8b8f97" stroke-width="1.2"/></g></svg>
<svg style="position:absolute;left:1199.0px;top:61.0px;overflow:visible" width="32" height="32" viewBox="0 0 32 32"><g transform="translate(0 1.5)"><rect x="5.6" y="6.8" width="14.4" height="9.8" rx="1.4" fill="#fbfbfb" stroke="#8b8f97" stroke-width="1.5"/><path d="M20 10.4L25.6 7.2V16.2L20 13Z" fill="#fbfbfb" stroke="#8b8f97" stroke-width="1.3" stroke-linejoin="round"/><path d="M12.6 16.8L9.4 25.6M13.4 16.8L16.8 25.6" stroke="#8b8f97" stroke-width="1.2"/><circle cx="21.6" cy="21.6" r="5.3" fill="#c7c9ce" stroke="#8b8f97" stroke-width="1"/><path d="M20.2 19L24.4 21.6L20.2 24.2Z" fill="#ececee" stroke="#8b8f97" stroke-width="0.7"/></g></svg>
<div style="position:absolute;left:915px;top:100px;width:375px;height:693px;background:#f8f9fa;"></div>
<div style="position:absolute;left:917px;top:100px;width:1px;height:693px;background:#eceef2;"></div>
<span class="t" style="left:925px;top:107.0px;font-size:15px;letter-spacing:-0.51px;color:#15151c;font-weight:bold;">Scenes</span>
<svg style="position:absolute;left:1258px;top:112px" width="30" height="11" viewBox="0 0 30 11"><path d="M3.5 1.5H8.5V5.5" fill="none" stroke="#111" stroke-width="1.3"/><rect x="1.6" y="4.1" width="5" height="4.6" fill="#f8f9fa" stroke="#111" stroke-width="1.3"/><path d="M1 3.9H7.2" stroke="#111" stroke-width="1.6"/><path d="M18.5 1.5L25.5 8.5M25.5 1.5L18.5 8.5" stroke="#111" stroke-width="1.6"/></svg>
<div class="inp" style="position:absolute;left:926px;top:145px;width:317px;height:21px;"></div>
<span class="t" style="left:932px;top:145.5px;font-size:13px;letter-spacing:0.25px;color:#8d929b;">Filter...</span>
<svg style="position:absolute;left:1254px;top:146px;" width="23" height="18" viewBox="0 0 23 18"><path d="M1 2.2C1 1.5 1.5 1 2.2 1H8.4L10.4 3.6H20.6C21.4 3.6 22 4.2 22 5V15.6C22 16.4 21.4 17 20.6 17H2.4C1.6 17 1 16.4 1 15.6Z" fill="#f5b400" stroke="#4a4a4a" stroke-width="0.9"/><path d="M1.5 4.2H22V15.6C22 16.3 21.4 16.6 20.6 16.6H2.4C1.8 16.6 1.5 16.2 1.5 15.6Z" fill="#ffcd1a"/></svg>
<div style="position:absolute;left:926px;top:176px;width:355px;height:334px;background:#fff;border:1px solid #e9ebef;box-sizing:border-box;border-radius:3px;"></div>
<div style="position:absolute;left:927px;top:177px;width:353px;height:30px;background:#f8f9fa;border-bottom:1px solid #e6e8ec;box-sizing:border-box;"></div>
<div style="position:absolute;left:1029px;top:177px;width:1px;height:29px;background:#e6e8ec;"></div>
<div style="position:absolute;left:1062px;top:177px;width:1px;height:29px;background:#e6e8ec;"></div>
<div style="position:absolute;left:1095px;top:177px;width:1px;height:29px;background:#e6e8ec;"></div>
<div style="position:absolute;left:1128px;top:177px;width:1px;height:29px;background:#e6e8ec;"></div>
<div style="position:absolute;left:1161px;top:177px;width:1px;height:29px;background:#e6e8ec;"></div>
<div style="position:absolute;left:1194px;top:177px;width:1px;height:29px;background:#e6e8ec;"></div>
<div style="position:absolute;left:1234px;top:177px;width:1px;height:29px;background:#e6e8ec;"></div>
<div style="position:absolute;left:1274px;top:177px;width:1px;height:29px;background:#e6e8ec;"></div>
<span class="t" style="left:934px;top:182.0px;font-size:13px;letter-spacing:-0.56px;color:#1e1e24;">Name</span>
<svg style="position:absolute;left:972px;top:175px;" width="12" height="8" viewBox="0 0 12 8"><path d="M2.8 6L6.5 2.2L10.2 6" stroke="#555" stroke-width="1.1" fill="none"/></svg>
<svg style="position:absolute;left:1029.0px;top:175.0px;overflow:visible" width="32" height="32" viewBox="0 0 32 32"><path d="M9.4 16.2C12 12.6 20 12.6 22.6 16.2C20 19.6 12 19.6 9.4 16.2Z" fill="#dff4f9" stroke="#5b6470" stroke-width="0.9"/><circle cx="16" cy="16" r="2.6" fill="#2aa9c9"/><circle cx="16" cy="16" r="1.1" fill="#1b2a33"/></svg>
<svg style="position:absolute;left:1062.0px;top:175.0px;overflow:visible" width="32" height="32" viewBox="0 0 32 32"><path d="M10.2 21.8L11 18.4L19.6 9.8L22.2 12.4L13.6 21Z" fill="#8d96a3" stroke="#4b5058" stroke-width="0.9" stroke-linejoin="round"/><path d="M19.6 9.8L20.8 8.6C21.4 8 22.4 8 23 8.6C23.8 9.4 23.8 10.2 23.2 10.8L22.2 12.4Z" fill="#e9434c" stroke="#4b5058" stroke-width="0.7"/><path d="M10.2 21.8L11 18.4L13.6 21Z" fill="#f1d9a6" stroke="#4b5058" stroke-width="0.7"/></svg>
<svg style="position:absolute;left:1095.0px;top:175.0px;overflow:visible" width="32" height="32" viewBox="0 0 32 32"><circle cx="16" cy="16" r="6.2" fill="#d9dbe0" stroke="#3a3e47" stroke-width="1"/><ellipse cx="16" cy="16" rx="3" ry="6.2" fill="none" stroke="#3a3e47" stroke-width="0.7"/><path d="M16 9.8V22.2M9.8 16H22.2M11 12.6C14 13.8 18 13.8 21 12.6M11 19.4C14 18.2 18 18.2 21 19.4" fill="none" stroke="#3a3e47" stroke-width="0.7"/></svg>
<svg style="position:absolute;left:1128.0px;top:175.0px;overflow:visible" width="32" height="32" viewBox="0 0 32 32"><circle cx="16" cy="16" r="5.1" fill="#35c7e6" stroke="#3e7f93" stroke-width="0.9"/><path d="M13.6 16L15.4 17.8L18.6 14.4" fill="none" stroke="#14505f" stroke-width="1.2"/></svg>
<svg style="position:absolute;left:1161.0px;top:175.0px;overflow:visible" width="32" height="32" viewBox="0 0 32 32"><path d="M10.4 10.4H19.8L21.8 12.4V21.6H10.4Z" fill="#39b8d6" stroke="#2b6777" stroke-width="1"/><rect x="12.6" y="10.6" width="5.8" height="3.6" fill="#e9f7fb"/><rect x="12.6" y="17" width="7" height="4.4" fill="#f2fbfd" stroke="#2b6777" stroke-width="0.6"/></svg>
<svg style="position:absolute;left:1193.0px;top:175.0px;overflow:visible" width="32" height="32" viewBox="0 0 32 32"><ellipse cx="16" cy="16" rx="5.4" ry="4.6" fill="#d4d7dc" stroke="#4c525c" stroke-width="1"/><path d="M16 16V11.4A5.4 4.6 0 0 0 10.8 14.6Z" fill="#2cc3e4" stroke="#4c525c" stroke-width="0.7"/><path d="M10.7 17.2C11.6 21 20.4 21 21.3 17.2" fill="none" stroke="#4c525c" stroke-width="1"/></svg>
<span class="t" style="left:1219px;top:182.0px;font-size:13px;letter-spacing:0.00px;color:#1e1e24;">c</span>
<svg style="position:absolute;left:1233.0px;top:175.0px;overflow:visible" width="32" height="32" viewBox="0 0 32 32"><ellipse cx="16" cy="16" rx="5.4" ry="4.6" fill="#d4d7dc" stroke="#4c525c" stroke-width="1"/><path d="M16 16V11.4A5.4 4.6 0 0 0 10.8 14.6Z" fill="#2cc3e4" stroke="#4c525c" stroke-width="0.7"/><path d="M10.7 17.2C11.6 21 20.4 21 21.3 17.2" fill="none" stroke="#4c525c" stroke-width="1"/></svg>
<span class="t" style="left:1259px;top:182.0px;font-size:13px;letter-spacing:0.00px;color:#1e1e24;">ç</span>
<div style="position:absolute;left:942px;top:207px;width:87px;height:24px;background:#3b9be0;"></div>
<svg style="position:absolute;left:938.0px;top:203.0px;overflow:visible" width="32" height="32" viewBox="0 0 32 32"><path d="M8.6 20.4L12.6 13.4L15 17M13.6 20.4L17.6 13.6L21.8 20.4" fill="none" stroke="#2d4258" stroke-width="1" stroke-linejoin="round"/><path d="M8.2 20.6H22.2" stroke="#2d4258" stroke-width="1"/><path d="M9.6 19.8L12.6 14.6L14.4 17.4L13 19.8ZM14.6 19.8L17.6 14.8L20.8 19.8Z" fill="#a9cdec"/></svg>
<span class="t" style="left:969px;top:209.5px;font-size:13px;letter-spacing:0.72px;color:#fff;">[default]</span>
<svg style="position:absolute;left:1135px;top:213px;" width="15" height="13" viewBox="0 0 15 13"><path d="M2.2 7.2L5.8 10.6L13 3.6" stroke="#6cb545" stroke-width="2.9" fill="none"/></svg>
<span class="t" style="left:1200px;top:209.5px;font-size:13px;letter-spacing:-0.10px;color:#1e1e24;">0.0b</span>
<span class="t" style="left:1240px;top:209.5px;font-size:13px;letter-spacing:-0.10px;color:#1e1e24;">0.0b</span>
<div style="position:absolute;left:926px;top:501px;width:328px;height:8px;background:#b9bfc8;border-radius:4px;"></div>
<svg style="position:absolute;left:925.0px;top:515.0px;overflow:visible" width="32" height="32" viewBox="0 0 32 32"><path d="M4.6 21.4L10.8 10.6L14.4 16.6M12.6 21.4L17.4 13.2L20.2 17.6" fill="none" stroke="#5e636c" stroke-width="1.3" stroke-linejoin="round"/><path d="M4.2 21.6H14" stroke="#5e636c" stroke-width="1.3"/><circle cx="20.8" cy="22.2" r="5.4" fill="#3fd3ec" stroke="#2b4c58" stroke-width="1"/><path d="M20.8 19.2V25.2M17.8 22.2H23.8" stroke="#16333d" stroke-width="1.3"/></svg>
<svg style="position:absolute;left:955.0px;top:515.0px;overflow:visible" width="32" height="32" viewBox="0 0 32 32"><path d="M9.6 10.4H22.4L21.2 25.4C21.1 26.2 20.6 26.6 19.8 26.6H12.2C11.4 26.6 10.9 26.2 10.8 25.4Z" fill="#e4e5e8" stroke="#8b8f97" stroke-width="1.2" stroke-linejoin="round"/><path d="M8 10.2H24M13 10V7.8C13 7 13.4 6.6 14.2 6.6H17.8C18.6 6.6 19 7 19 7.8V10" fill="none" stroke="#8b8f97" stroke-width="1.2"/><path d="M13.2 13.4L13.6 23.6M16 13.4V23.6M18.8 13.4L18.4 23.6" stroke="#8b8f97" stroke-width="1"/></svg>
<svg style="position:absolute;left:986.0px;top:515.0px;overflow:visible" width="32" height="32" viewBox="0 0 32 32"><rect x="4.6" y="11.2" width="22" height="9.8" fill="#f0f1f3" stroke="#8b8f97" stroke-width="1.1"/><path d="M20.6 6.6C19.6 6.6 19 7.2 19 8V24C19 24.8 19.6 25.4 20.6 25.4M17.4 6.6C18.4 6.6 19 7.2 19 8M17.4 25.4C18.4 25.4 19 24.8 19 24" fill="none" stroke="#8b8f97" stroke-width="1.1"/><text x="7" y="19" font-family="Liberation Sans" font-size="7.5" font-weight="bold" fill="#8b8f97">Aa</text></svg>
<svg style="position:absolute;left:1025px;top:523.5px" width="16" height="16" viewBox="0 0 16 16"><path d="M3.5199999999999996 6.26L8 10.74L12.48 6.26" fill="none" stroke="#3c4048" stroke-width="2.60" stroke-linecap="round" stroke-linejoin="round"/></svg>
<svg style="position:absolute;left:1048.0px;top:515.0px;overflow:visible" width="32" height="32" viewBox="0 0 32 32"><rect x="6.6" y="6.8" width="13.6" height="13.6" rx="1" fill="#dfe0e4" stroke="#8b8f97" stroke-width="1.2"/><rect x="11.4" y="11.6" width="13.6" height="13.6" rx="1" fill="#fbfbfb" stroke="#8b8f97" stroke-width="1.2"/></svg>
<svg style="position:absolute;left:1079.0px;top:515.0px;overflow:visible" width="32" height="32" viewBox="0 0 32 32"><path d="M6.8 9.6V22.8C6.8 24.8 10.6 26.2 14.8 26.2C19 26.2 22.8 24.8 22.8 22.8V9.6" fill="#dcdde1" stroke="#8b8f97" stroke-width="1.2"/><ellipse cx="14.8" cy="9.6" rx="8" ry="3.4" fill="#ececef" stroke="#8b8f97" stroke-width="1.2"/><path d="M6.8 14C6.8 16 10.6 17.4 14.8 17.4C19 17.4 22.8 16 22.8 14M6.8 18.4C6.8 20.4 10.6 21.8 14.8 21.8C19 21.8 22.8 20.4 22.8 18.4" fill="none" stroke="#8b8f97" stroke-width="1.2"/><circle cx="22" cy="22.6" r="4.8" fill="#f4f4f5" stroke="#8b8f97" stroke-width="1.2"/><path d="M18.8 25.8L25.2 19.4" stroke="#8b8f97" stroke-width="1.2"/></svg>
<div class="sep" style="left:1115px;top:516px;height:31px;"></div>
<svg style="position:absolute;left:1119.0px;top:515.0px;overflow:visible" width="32" height="32" viewBox="0 0 32 32"><defs><linearGradient id="ptrg2" x1="0" y1="0" x2="1" y2="1"><stop offset="0" stop-color="#ffffff"/><stop offset="1" stop-color="#d9dade"/></linearGradient></defs><path d="M6.6 7.2L26 14.6L17.4 17.8L14 26.4Z" fill="url(#ptrg2)" stroke="#3a3e47" stroke-width="1.4" stroke-linejoin="round"/></svg>
<div class="sep" style="left:1155px;top:516px;height:31px;"></div>
<svg style="position:absolute;left:1159.0px;top:515.0px;overflow:visible" width="32" height="32" viewBox="0 0 32 32"><path d="M10.2 8.4H13.6V12H18.4V8.4H21.8L25.6 19.4A4.6 4.6 0 1 1 16.8 20.6V17H15.2V20.6A4.6 4.6 0 1 1 6.4 19.4Z" fill="#b9bcc3" stroke="#8b8f97" stroke-width="1.1" stroke-linejoin="round"/><circle cx="10.6" cy="21" r="2.6" fill="#d9dbe0" stroke="#8b8f97" stroke-width="0.8"/><circle cx="21.4" cy="21" r="2.6" fill="#d9dbe0" stroke="#8b8f97" stroke-width="0.8"/></svg>
<svg style="position:absolute;left:1190.0px;top:515.0px;overflow:visible" width="32" height="32" viewBox="0 0 32 32"><circle cx="14.6" cy="14.6" r="5" fill="#f1f1f3" stroke="#8b8f97" stroke-width="1.2"/><path d="M14.6 4.6V7.4M7.4 7.4L9.4 9.4M21.8 7.4L19.8 9.4M4.6 14.6H7.4M7.4 21.8L9.4 19.8M14.6 21.8V24.2" stroke="#8b8f97" stroke-width="1.2"/><circle cx="21.6" cy="22" r="5" fill="#c4c6cb" stroke="#8b8f97" stroke-width="1"/><path d="M21.6 19.2V24.8M18.8 22H24.4" stroke="#6b6f77" stroke-width="1.3"/></svg>
<svg style="position:absolute;left:1222.0px;top:515.0px;overflow:visible" width="32" height="32" viewBox="0 0 32 32"><rect x="5.6" y="5.6" width="19.6" height="19.6" fill="#c2c4c9" stroke="#8b8f97" stroke-width="1.2"/><path d="M5.6 5.6L11.6 11.6H19.2L25.2 5.6M11.6 11.6V25M19.2 11.6V18" fill="none" stroke="#8b8f97" stroke-width="1"/><path d="M5.6 5.6L11.6 11.6H19.2L25.2 5.6Z" fill="#ededf0"/><path d="M5.6 5.6L11.6 11.6V25.2H5.6Z" fill="#dcdde1"/><rect x="11.6" y="11.6" width="7.6" height="13.6" fill="#f4f4f6"/><rect x="17.6" y="17.4" width="9.6" height="9.8" fill="#ececef" stroke="#8b8f97" stroke-width="1"/><path d="M19.6 21.4H20.8M22 21.4H23.2M24.2 21.4H25.4M19.6 23.4H20.8M22 23.4H23.2M24.2 23.4H25.4M19.6 25.4H20.8M22 25.4H23.2M21.4 19L22.4 20.2L25 17.8" fill="none" stroke="#6b6f77" stroke-width="0.9"/></svg>
<span class="t" style="left:1270px;top:520.5px;font-size:14px;letter-spacing:0.00px;color:#111;font-weight:bold;">»</span>
<div style="position:absolute;left:918px;top:556px;width:372px;height:1px;background:#eceef2;"></div>
<span class="t" style="left:925px;top:564.5px;font-size:15px;letter-spacing:0.22px;color:#15151c;font-weight:bold;">History</span>
<svg style="position:absolute;left:1258px;top:569px" width="30" height="11" viewBox="0 0 30 11"><path d="M3.5 1.5H8.5V5.5" fill="none" stroke="#111" stroke-width="1.3"/><rect x="1.6" y="4.1" width="5" height="4.6" fill="#f8f9fa" stroke="#111" stroke-width="1.3"/><path d="M1 3.9H7.2" stroke="#111" stroke-width="1.6"/><path d="M18.5 1.5L25.5 8.5M25.5 1.5L18.5 8.5" stroke="#111" stroke-width="1.6"/></svg>
<div style="position:absolute;left:926px;top:599px;width:355px;height:149px;background:#fff;border:1px solid #e9ebef;box-sizing:border-box;border-radius:3px;"></div>
<div style="position:absolute;left:927px;top:600px;width:353px;height:22px;background:#e3f3f8;"></div>
<span class="t" style="left:929px;top:601.0px;font-size:13px;letter-spacing:0.12px;color:#1e1e24;">Revert all</span>
<svg style="position:absolute;left:925.0px;top:752.0px;overflow:visible" width="32" height="32" viewBox="0 0 32 32"><path d="M14.4 8.6L5.6 15L14.4 21.4V17.6C19.4 17.4 22.6 19 25 23.2C24.8 16.4 20.8 12.6 14.4 12.4Z" fill="#fbfbfb" stroke="#8b8f97" stroke-width="1.3" stroke-linejoin="round"/></svg>
<svg style="position:absolute;left:955.0px;top:752.0px;overflow:visible" width="32" height="32" viewBox="0 0 32 32"><path d="M17.6 8.6L26.4 15L17.6 21.4V17.6C12.6 17.4 9.4 19 7 23.2C7.2 16.4 11.2 12.6 17.6 12.4Z" fill="#fbfbfb" stroke="#8b8f97" stroke-width="1.3" stroke-linejoin="round"/></svg>
<div style="position:absolute;left:0px;top:793px;width:1290px;height:42px;background:#f8f9fa;"></div>
<div class="dots" style="position:absolute;left:8px;top:796px;width:2px;height:38px;"></div>
<div class="inp big" style="position:absolute;left:18px;top:797px;width:121px;height:34px;"></div>
<span class="t" style="left:23px;top:804.5px;font-size:13px;letter-spacing:0.17px;color:#1e1e24;">Select All</span>
<svg style="position:absolute;left:119px;top:807px" width="16" height="16" viewBox="0 0 16 16"><path d="M4.720000000000001 6.86L8 10.14L11.28 6.86" fill="none" stroke="#33363f" stroke-width="2.30" stroke-linecap="round" stroke-linejoin="round"/></svg>
<div style="position:absolute;left:143px;top:798px;width:31px;height:31px;background:#e0f1f6;border-radius:4px;"></div>
<svg style="position:absolute;left:141.0px;top:798.0px;overflow:visible" width="32" height="32" viewBox="0 0 32 32"><defs><linearGradient id="ptrg" x1="0" y1="0" x2="1" y2="1"><stop offset="0" stop-color="#ffffff"/><stop offset="1" stop-color="#d9dade"/></linearGradient></defs><path d="M6.4 5.4L26.8 13.3L17.8 16.5L14.8 25.5Z" fill="url(#ptrg)" stroke="#3a3e47" stroke-width="1.4" stroke-linejoin="round"/></svg>
<svg style="position:absolute;left:172.0px;top:798.0px;overflow:visible" width="32" height="32" viewBox="0 0 32 32"><rect x="13.6" y="12.4" width="6.4" height="6.2" fill="#33d3ee" stroke="#2b4c58" stroke-width="1"/><path d="M6.8 5.8L13.6 12.4M26.8 5.8L20 12.4M6.8 25.2L13.6 18.6M26.8 25.2L20 18.6" stroke="#3a3e47" stroke-width="1.2"/><path d="M6.6 9.4V5.6H10.4M23.2 5.6H27V9.4M6.6 21.6V25.4H10.4M23.2 25.4H27V21.6" fill="none" stroke="#3a3e47" stroke-width="1.2"/></svg>
<svg style="position:absolute;left:203.0px;top:798.0px;overflow:visible" width="32" height="32" viewBox="0 0 32 32"><rect x="14.2" y="12.8" width="5.2" height="5" fill="#33d3ee" stroke="#2b4c58" stroke-width="1"/><path d="M6.6 19.6C5.8 13.6 10.6 8.2 17.4 7.2M26.8 11.6C27.6 17.6 22.8 23 16 24" fill="none" stroke="#3a3e47" stroke-width="1.2"/><path d="M15 4.2L18.4 7L15.6 10.4M18.4 27L15 24.2L17.8 20.8" fill="none" stroke="#3a3e47" stroke-width="1.2"/></svg>
<svg style="position:absolute;left:234.0px;top:798.0px;overflow:visible" width="32" height="32" viewBox="0 0 32 32"><path d="M6.4 14.6V5.6H26.5V25.2H17" fill="none" stroke="#3a3e47" stroke-width="1.2"/><rect x="6.8" y="18" width="7.1" height="6.8" fill="#33d3ee" stroke="#2b4c58" stroke-width="1"/><path d="M15.4 16.2L24.2 8.2M19.6 7.8H24.6V12.8" fill="none" stroke="#3a3e47" stroke-width="1.2"/></svg>
<div class="inp big" style="position:absolute;left:271px;top:797px;width:60px;height:34px;"></div>
<span class="t" style="left:276px;top:804.5px;font-size:13px;letter-spacing:-0.18px;color:#1e1e24;">World</span>
<svg style="position:absolute;left:314px;top:807px" width="16" height="16" viewBox="0 0 16 16"><path d="M4.720000000000001 6.86L8 10.14L11.28 6.86" fill="none" stroke="#33363f" stroke-width="2.30" stroke-linecap="round" stroke-linejoin="round"/></svg>
<div class="inp big" style="position:absolute;left:340px;top:797px;width:101px;height:34px;"></div>
<span class="t" style="left:344px;top:804.5px;font-size:13px;letter-spacing:-0.12px;color:#1e1e24;">No Snapping</span>
<svg style="position:absolute;left:423px;top:807px" width="16" height="16" viewBox="0 0 16 16"><path d="M4.720000000000001 6.86L8 10.14L11.28 6.86" fill="none" stroke="#33363f" stroke-width="2.30" stroke-linecap="round" stroke-linejoin="round"/></svg>
<span class="t" style="left:449px;top:804.5px;font-size:13px;letter-spacing:-0.28px;color:#1e1e24;">X:</span>
<div class="inp" style="position:absolute;left:473px;top:797px;width:118px;height:34px;background:#e9ecf0;border-color:#d3d7dd;"></div>
<span class="t" style="left:600px;top:804.5px;font-size:13px;letter-spacing:-0.56px;color:#1e1e24;">Y:</span>
<div class="inp" style="position:absolute;left:622px;top:797px;width:119px;height:34px;background:#e9ecf0;border-color:#d3d7dd;"></div>
<span class="t" style="left:750px;top:804.5px;font-size:13px;letter-spacing:-0.55px;color:#1e1e24;">Z:</span>
<div class="inp" style="position:absolute;left:772px;top:797px;width:118px;height:34px;background:#e9ecf0;border-color:#d3d7dd;"></div>
<div style="position:absolute;left:0px;top:835px;width:1290px;height:30px;background:#f8f9fa;border-top:1px solid #eceef2;box-sizing:border-box;"></div>
<div style="position:absolute;left:0px;top:865px;width:1290px;height:1px;background:#b4b4b4;"></div>
<div style="position:absolute;left:0px;top:866px;width:1290px;height:1px;background:#f0f0f0;"></div>
<svg style="position:absolute;left:363px;top:843px;" width="18" height="18" viewBox="0 0 18 18"><circle cx="9" cy="9" r="6.6" fill="none" stroke="#29bfe0" stroke-width="1.5"/></svg>
<div style="position:absolute;left:388px;top:838px;width:1px;height:27px;background:#e6e8ec;"></div>
<div style="position:absolute;left:484px;top:838px;width:1px;height:27px;background:#e6e8ec;"></div>
<div style="position:absolute;left:610px;top:838px;width:1px;height:27px;background:#e6e8ec;"></div>
<div style="position:absolute;left:695px;top:838px;width:1px;height:27px;background:#e6e8ec;"></div>
<div style="position:absolute;left:1241px;top:838px;width:1px;height:27px;background:#e6e8ec;"></div>
<div style="position:absolute;left:1270px;top:838px;width:1px;height:27px;background:#e6e8ec;"></div>
<span class="t" style="left:399px;top:842.0px;font-size:13px;letter-spacing:0.03px;color:#1e1e24;">FPS = 302</span>
<span class="t" style="left:495px;top:842.0px;font-size:13px;letter-spacing:0.50px;color:#1e1e24;">res = 915 x 693</span>
<span class="t" style="left:621px;top:842.0px;font-size:13px;letter-spacing:0.50px;color:#1e1e24;">time x 1</span>
<span class="t" style="left:706px;top:842.0px;font-size:13px;letter-spacing:0.64px;color:#1e1e24;">alt = 2m (2.0m above ground) / x = 0.00 - y = 0.00 - z = 2.00</span>
<svg style="position:absolute;left:1239.0px;top:836.0px;overflow:visible" width="32" height="32" viewBox="0 0 32 32"><circle cx="16" cy="16" r="7.4" fill="#fbfbfb" stroke="#5b5f68" stroke-width="1"/><path d="M20.2 11.8L17.4 17.4L11.8 20.2L14.6 14.6Z" fill="#f3a9ae" stroke="#c94a55" stroke-width="0.7"/><path d="M20.2 11.8L17.4 17.4L14.6 14.6Z" fill="#e8424a"/></svg>
<div style="position:absolute;left:915px;top:792px;width:373px;height:1px;background:#eceef2;"></div>
<div style="position:absolute;left:0px;top:31px;width:1px;height:834px;background:#fff;"></div>
<div style="position:absolute;left:1288px;top:31px;width:2px;height:834px;background:#fff;"></div>
<div style="position:absolute;left:1287px;top:57px;width:1px;height:43px;background:#eceef2;"></div>
<div style="position:absolute;left:246px;top:57px;width:161px;height:225px;background:#fbfbfc;box-shadow:2px 2px 4px rgba(0,0,0,0.55), 1px 1px 1px rgba(0,0,0,0.35);"></div>
<svg style="position:absolute;left:244.6px;top:56.2px;overflow:visible" width="32" height="32" viewBox="0 0 32 32"><g transform="translate(0.9 0.4)"><path d="M12.89 8.09L13.39 5.32L18.61 5.32L19.11 8.09L21.29 9.35L23.95 8.39L26.56 12.92L24.41 14.74L24.41 17.26L26.56 19.08L23.95 23.61L21.29 22.65L19.11 23.91L18.61 26.68L13.39 26.68L12.89 23.91L10.71 22.65L8.05 23.61L5.44 19.08L7.59 17.26L7.59 14.74L5.44 12.92L8.05 8.39L10.71 9.35Z" fill="none" stroke="#3a3e47" stroke-width="1.5" stroke-linejoin="round"/><circle cx="16" cy="16" r="4.5" fill="none" stroke="#3a3e47" stroke-width="1.5"/></g></svg>
<span class="t" style="left:278px;top:63.5px;font-size:13px;letter-spacing:0.26px;color:#1e1e24;">Options...</span>
<div style="position:absolute;left:252px;top:96px;width:150px;height:1px;background:#e6e8ec;"></div>
<svg style="position:absolute;left:240.9px;top:104.9px;overflow:visible" width="32" height="32" viewBox="0 0 32 32"><g transform="translate(0 1.3)"><circle cx="16" cy="6.6" r="2.3" fill="#3ecfe9" stroke="#1d2a33" stroke-width="1.3"/><path d="M10.4 12.8C10.4 11.6 11.2 10.9 12.4 10.9H19.6C20.8 10.9 21.6 11.6 21.6 12.8V18.6C21.6 19.6 20.8 20 19.6 20V25C19.6 26.2 18.8 26.8 17.8 26.8H14.2C13.2 26.8 12.4 26.2 12.4 25V20C11.2 20 10.4 19.6 10.4 18.6Z" fill="#3ecfe9" stroke="#1d2a33" stroke-width="1.4" stroke-linejoin="round"/></g></svg>
<span class="t" style="left:278px;top:112.5px;font-size:13px;letter-spacing:-0.03px;color:#1e1e24;">Dummy Character</span>
<svg style="position:absolute;left:245.7px;top:138.1px;overflow:visible" width="32" height="32" viewBox="0 0 32 32"><g transform="translate(0 1)"><path d="M17.6 8.6L23.4 14.4L12.4 25.2C11.4 26.2 9.4 25.4 7.8 26.8L5.4 24.6C6.8 22.8 5.8 21 6.8 20Z" fill="#e9ebef" stroke="#3a3e47" stroke-width="1.2" stroke-linejoin="round"/><path d="M18 9.2L23 14.2L25.8 11.4C27.4 9.8 27.2 7.4 25.8 6C24.4 4.6 22 4.4 20.6 6Z" fill="#ee5058" stroke="#4a3136" stroke-width="1" stroke-linejoin="round"/><path d="M16.4 7.4L24.8 15.4" stroke="#3a3e47" stroke-width="1.2"/></g></svg>
<span class="t" style="left:278px;top:144.5px;font-size:13px;letter-spacing:-0.16px;color:#1e1e24;">Color Picker</span>
<span class="t" style="left:383px;top:144.5px;font-size:13px;letter-spacing:0.00px;color:#1e1e24;">P</span>
<svg style="position:absolute;left:245.4px;top:170.4px;overflow:visible" width="32" height="32" viewBox="0 0 32 32"><path d="M6.4 6.6H25.6L27.4 20.6H4.6Z" fill="#bfe6ef" stroke="#5d6873" stroke-width="1.2" stroke-linejoin="round"/><path d="M5.9 11.2H26.1M5.3 15.8H26.7M10.4 6.6L9.3 20.6M14.2 6.6L13.8 20.6M17.8 6.6L18.2 20.6M21.6 6.6L22.7 20.6" stroke="#5d6873" stroke-width="0.9"/><path d="M16 20.8V25.4" stroke="#7d8792" stroke-width="2.2"/><path d="M16 20.8V25.4" stroke="#dfe3e8" stroke-width="0.8"/><path d="M13.4 25.6H18.6" stroke="#7d8792" stroke-width="1.2"/></svg>
<span class="t" style="left:278px;top:176.0px;font-size:13px;letter-spacing:-0.42px;color:#1e1e24;">Solar Field</span>
<div style="position:absolute;left:252px;top:209px;width:150px;height:1px;background:#e6e8ec;"></div>
<svg style="position:absolute;left:245.7px;top:217.1px;overflow:visible" width="32" height="32" viewBox="0 0 32 32"><clipPath id="sunclip2"><rect x="0" y="0" width="32" height="21.9"/></clipPath><circle cx="16.1" cy="19.1" r="4.7" fill="#ffc800" clip-path="url(#sunclip2)"/><path d="M12.6 19.6A3.6 3.6 0 0 1 16.6 15.4" fill="none" stroke="#ffe27a" stroke-width="1.1" clip-path="url(#sunclip2)"/><path d="M4 22.7H28.3" stroke="#4c5059" stroke-width="1.3"/><path d="M16.1 8V11.6M8.4 11.3L11.3 14.1M23.8 11.3L20.9 14.1M5.3 18.7H8.4M23.9 18.7H27" stroke="#4c5059" stroke-width="1.3"/></svg>
<span class="t" style="left:278px;top:225.5px;font-size:13px;letter-spacing:-0.01px;color:#1e1e24;">Sun Direction</span>
<span class="t" style="left:383px;top:225.5px;font-size:13px;letter-spacing:0.00px;color:#1e1e24;">C</span>
<svg style="position:absolute;left:245.8px;top:250.3px;overflow:visible" width="32" height="32" viewBox="0 0 32 32"><path d="M6.6 13.6H17.8C21 13.6 21.2 8.8 18.2 8.8C16.6 8.8 15.8 10 16 11M8.8 16.6H23.6C27.2 16.6 27.2 11.6 24 11.6C22.4 11.6 21.6 12.8 21.8 13.8M6.4 19.6H20C23.2 19.6 23.2 24.4 20.2 24.4C18.6 24.4 18 23.4 18.2 22.4M11 22.6H15.2M23.4 19.6H25.4C27 19.6 27.2 21.6 25.8 21.8" fill="none" stroke="#4f8298" stroke-width="2.4" stroke-linecap="round"/><path d="M6.6 13.6H17.8C21 13.6 21.2 8.8 18.2 8.8C16.6 8.8 15.8 10 16 11M8.8 16.6H23.6C27.2 16.6 27.2 11.6 24 11.6C22.4 11.6 21.6 12.8 21.8 13.8M6.4 19.6H20C23.2 19.6 23.2 24.4 20.2 24.4C18.6 24.4 18 23.4 18.2 22.4M11 22.6H15.2M23.4 19.6H25.4C27 19.6 27.2 21.6 25.8 21.8" fill="none" stroke="#bfeaf4" stroke-width="1.1" stroke-linecap="round"/></svg>
<span class="t" style="left:278px;top:257.5px;font-size:13px;letter-spacing:0.11px;color:#1e1e24;">Wind Direction</span>
<span class="t" style="left:383px;top:257.5px;font-size:13px;letter-spacing:0.00px;color:#1e1e24;">V</span>
<div style="position:absolute;left:235.6px;top:166.6px;width:183px;height:37.6px;box-sizing:border-box;border:2.8px solid #ea9a1c;border-radius:19px;"></div>
<div style="position:absolute;left:440px;top:131px;width:436px;height:629px;background:#f8f9fa;"></div>
<div style="position:absolute;left:440px;top:131px;width:436px;height:30px;background:#fff;"></div>
<span class="t" style="left:448px;top:136.0px;font-size:12px;letter-spacing:-0.29px;color:#000;-webkit-text-stroke:0;">Solar Field Generator</span>
<div style="position:absolute;left:856px;top:138px;width:19px;height:19px;background:#c4414c;"></div>
<svg style="position:absolute;left:856px;top:138px;" width="19" height="19" viewBox="0 0 19 19"><path d="M7 7.4L12 12.4M12 7.4L7 12.4" stroke="#fff" stroke-width="1.6"/></svg>
<div style="position:absolute;left:448px;top:169px;width:413px;height:546px;box-sizing:border-box;background:#fff;border:1px solid #e9ebef;border-radius:3px;"></div>
<div style="position:absolute;left:861px;top:169px;width:7.5px;height:466px;background:#bcc2cb;border-radius:4px;"></div>
<div style="position:absolute;left:457px;top:184px;width:396px;height:323px;box-sizing:border-box;border:1px solid #e6e9ed;border-radius:4px;"></div>
<div style="position:absolute;left:465px;top:182px;width:71px;height:5px;background:#fff;"></div>
<span class="t" style="left:468px;top:174.5px;font-size:13px;letter-spacing:-0.22px;color:#1e1e24;">Solar Panel</span>
<div style="position:absolute;left:457px;top:520px;width:396px;height:188px;box-sizing:border-box;border:1px solid #e6e9ed;border-radius:4px;"></div>
<div style="position:absolute;left:465px;top:518px;width:32px;height:5px;background:#fff;"></div>
<span class="t" style="left:468px;top:510.5px;font-size:13px;letter-spacing:-0.55px;color:#1e1e24;">Field</span>
<span class="t" style="left:470px;top:201.5px;font-size:13px;letter-spacing:0.22px;color:#1e1e24;">Modules count:</span>
<span class="t" style="left:470px;top:229.5px;font-size:13px;letter-spacing:0.18px;color:#1e1e24;">Module spacing (m):</span>
<span class="t" style="left:470px;top:257.5px;font-size:13px;letter-spacing:0.13px;color:#1e1e24;">Module size (m):</span>
<span class="t" style="left:470px;top:285.5px;font-size:13px;letter-spacing:0.09px;color:#1e1e24;">Panel size (m):</span>
<span class="t" style="left:470px;top:313.5px;font-size:13px;letter-spacing:0.48px;color:#1e1e24;">Center height (m):</span>
<span class="t" style="left:470px;top:341.5px;font-size:13px;letter-spacing:0.28px;color:#1e1e24;">Panel angle (°):</span>
<span class="t" style="left:470px;top:369.5px;font-size:13px;letter-spacing:0.55px;color:#1e1e24;">Bottom-top heights (m):</span>
<span class="t" style="left:470px;top:395.5px;font-size:13px;letter-spacing:-0.08px;color:#1e1e24;">Bifacial modules:</span>
<span class="t" style="left:470px;top:421.5px;font-size:13px;letter-spacing:0.22px;color:#1e1e24;">Poles count:</span>
<span class="t" style="left:470px;top:449.5px;font-size:13px;letter-spacing:0.42px;color:#1e1e24;">Concrete type:</span>
<span class="t" style="left:470px;top:477.5px;font-size:13px;letter-spacing:0.45px;color:#1e1e24;">Concrete height (m):</span>
<div class="inp" style="position:absolute;left:631px;top:200px;width:89px;height:22px;"></div>
<div style="position:absolute;left:703px;top:201px;width:1px;height:20px;background:#e9ebef;"></div>
<div style="position:absolute;left:704px;top:201px;width:15px;height:20px;background:#fafbfc;border-radius:0 3px 3px 0;"></div>
<div style="position:absolute;left:704px;top:210.5px;width:15px;height:1px;background:#eceef1;"></div>
<svg style="position:absolute;left:707px;top:200px;" width="9" height="22" viewBox="0 0 9 22"><path d="M2.1 6.8L4.5 4.5L6.9 6.8M2.1 14.9L4.5 17.2L6.9 14.9" fill="none" stroke="#5a5f69" stroke-width="1.3"/></svg>
<span class="t" style="left:637.6px;top:201.5px;font-size:13px;letter-spacing:0.00px;color:#1e1e24;">2</span>
<div class="inp" style="position:absolute;left:726px;top:200px;width:88px;height:22px;"></div>
<div style="position:absolute;left:797px;top:201px;width:1px;height:20px;background:#e9ebef;"></div>
<div style="position:absolute;left:798px;top:201px;width:15px;height:20px;background:#fafbfc;border-radius:0 3px 3px 0;"></div>
<div style="position:absolute;left:798px;top:210.5px;width:15px;height:1px;background:#eceef1;"></div>
<svg style="position:absolute;left:801px;top:200px;" width="9" height="22" viewBox="0 0 9 22"><path d="M2.1 6.8L4.5 4.5L6.9 6.8M2.1 14.9L4.5 17.2L6.9 14.9" fill="none" stroke="#5a5f69" stroke-width="1.3"/></svg>
<span class="t" style="left:732.6px;top:201.5px;font-size:13px;letter-spacing:0.00px;color:#1e1e24;">3</span>
<div class="inp" style="position:absolute;left:631px;top:228px;width:89px;height:22px;"></div>
<div style="position:absolute;left:703px;top:229px;width:1px;height:20px;background:#e9ebef;"></div>
<div style="position:absolute;left:704px;top:229px;width:15px;height:20px;background:#fafbfc;border-radius:0 3px 3px 0;"></div>
<div style="position:absolute;left:704px;top:238.5px;width:15px;height:1px;background:#eceef1;"></div>
<svg style="position:absolute;left:707px;top:228px;" width="9" height="22" viewBox="0 0 9 22"><path d="M2.1 6.8L4.5 4.5L6.9 6.8M2.1 14.9L4.5 17.2L6.9 14.9" fill="none" stroke="#5a5f69" stroke-width="1.3"/></svg>
<span class="t" style="left:637.6px;top:229.5px;font-size:13px;letter-spacing:0.67px;color:#1e1e24;">0,00</span>
<div class="inp" style="position:absolute;left:726px;top:228px;width:88px;height:22px;"></div>
<div style="position:absolute;left:797px;top:229px;width:1px;height:20px;background:#e9ebef;"></div>
<div style="position:absolute;left:798px;top:229px;width:15px;height:20px;background:#fafbfc;border-radius:0 3px 3px 0;"></div>
<div style="position:absolute;left:798px;top:238.5px;width:15px;height:1px;background:#eceef1;"></div>
<svg style="position:absolute;left:801px;top:228px;" width="9" height="22" viewBox="0 0 9 22"><path d="M2.1 6.8L4.5 4.5L6.9 6.8M2.1 14.9L4.5 17.2L6.9 14.9" fill="none" stroke="#5a5f69" stroke-width="1.3"/></svg>
<span class="t" style="left:732.6px;top:229.5px;font-size:13px;letter-spacing:0.67px;color:#1e1e24;">0,00</span>
<div class="inp" style="position:absolute;left:631px;top:256px;width:89px;height:22px;"></div>
<div style="position:absolute;left:703px;top:257px;width:1px;height:20px;background:#e9ebef;"></div>
<div style="position:absolute;left:704px;top:257px;width:15px;height:20px;background:#fafbfc;border-radius:0 3px 3px 0;"></div>
<div style="position:absolute;left:704px;top:266.5px;width:15px;height:1px;background:#eceef1;"></div>
<svg style="position:absolute;left:707px;top:256px;" width="9" height="22" viewBox="0 0 9 22"><path d="M2.1 6.8L4.5 4.5L6.9 6.8M2.1 14.9L4.5 17.2L6.9 14.9" fill="none" stroke="#5a5f69" stroke-width="1.3"/></svg>
<span class="t" style="left:637.6px;top:257.5px;font-size:13px;letter-spacing:0.67px;color:#1e1e24;">2,00</span>
<div class="inp" style="position:absolute;left:726px;top:256px;width:88px;height:22px;"></div>
<div style="position:absolute;left:797px;top:257px;width:1px;height:20px;background:#e9ebef;"></div>
<div style="position:absolute;left:798px;top:257px;width:15px;height:20px;background:#fafbfc;border-radius:0 3px 3px 0;"></div>
<div style="position:absolute;left:798px;top:266.5px;width:15px;height:1px;background:#eceef1;"></div>
<svg style="position:absolute;left:801px;top:256px;" width="9" height="22" viewBox="0 0 9 22"><path d="M2.1 6.8L4.5 4.5L6.9 6.8M2.1 14.9L4.5 17.2L6.9 14.9" fill="none" stroke="#5a5f69" stroke-width="1.3"/></svg>
<span class="t" style="left:732.6px;top:257.5px;font-size:13px;letter-spacing:0.67px;color:#1e1e24;">1,00</span>
<div style="position:absolute;left:821px;top:261px;width:13px;height:13px;background:#3a9ae4;border-radius:3px;"></div>
<svg style="position:absolute;left:821px;top:261px;" width="13" height="13" viewBox="0 0 13 13"><path d="M3 6.6L5.6 9.2L10 3.8" fill="none" stroke="#fff" stroke-width="1.7"/></svg>
<div class="inp dis" style="position:absolute;left:631px;top:284px;width:89px;height:22px;"></div>
<div style="position:absolute;left:703px;top:285px;width:1px;height:20px;background:#cfd4da;"></div>
<div style="position:absolute;left:704px;top:285px;width:15px;height:20px;background:#f1f3f5;border-radius:0 3px 3px 0;"></div>
<div style="position:absolute;left:704px;top:294.5px;width:15px;height:1px;background:#d5d9df;"></div>
<svg style="position:absolute;left:707px;top:284px;" width="9" height="22" viewBox="0 0 9 22"><path d="M2.1 6.8L4.5 4.5L6.9 6.8M2.1 14.9L4.5 17.2L6.9 14.9" fill="none" stroke="#5a5f69" stroke-width="1.3"/></svg>
<span class="t" style="left:637.6px;top:285.5px;font-size:13px;letter-spacing:0.67px;color:#7b808a;">4,00</span>
<div class="inp dis" style="position:absolute;left:726px;top:284px;width:88px;height:22px;"></div>
<div style="position:absolute;left:797px;top:285px;width:1px;height:20px;background:#cfd4da;"></div>
<div style="position:absolute;left:798px;top:285px;width:15px;height:20px;background:#f1f3f5;border-radius:0 3px 3px 0;"></div>
<div style="position:absolute;left:798px;top:294.5px;width:15px;height:1px;background:#d5d9df;"></div>
<svg style="position:absolute;left:801px;top:284px;" width="9" height="22" viewBox="0 0 9 22"><path d="M2.1 6.8L4.5 4.5L6.9 6.8M2.1 14.9L4.5 17.2L6.9 14.9" fill="none" stroke="#5a5f69" stroke-width="1.3"/></svg>
<span class="t" style="left:732.6px;top:285.5px;font-size:13px;letter-spacing:0.67px;color:#7b808a;">3,00</span>
<div style="position:absolute;left:821px;top:289px;width:13px;height:13px;box-sizing:border-box;background:#fff;border:1.4px solid #3c4048;border-radius:3px;"></div>
<div class="inp" style="position:absolute;left:631px;top:312px;width:183px;height:22px;"></div>
<div style="position:absolute;left:797px;top:313px;width:1px;height:20px;background:#e9ebef;"></div>
<div style="position:absolute;left:798px;top:313px;width:15px;height:20px;background:#fafbfc;border-radius:0 3px 3px 0;"></div>
<div style="position:absolute;left:798px;top:322.5px;width:15px;height:1px;background:#eceef1;"></div>
<svg style="position:absolute;left:801px;top:312px;" width="9" height="22" viewBox="0 0 9 22"><path d="M2.1 6.8L4.5 4.5L6.9 6.8M2.1 14.9L4.5 17.2L6.9 14.9" fill="none" stroke="#5a5f69" stroke-width="1.3"/></svg>
<span class="t" style="left:637.6px;top:313.5px;font-size:13px;letter-spacing:0.67px;color:#1e1e24;">2,00</span>
<div style="position:absolute;left:821px;top:330px;width:13px;height:13px;background:#3a9ae4;border-radius:3px;"></div>
<svg style="position:absolute;left:821px;top:330px;" width="13" height="13" viewBox="0 0 13 13"><path d="M3 6.6L5.6 9.2L10 3.8" fill="none" stroke="#fff" stroke-width="1.7"/></svg>
<div style="position:absolute;left:631px;top:350px;width:103px;height:1px;background:#e3e6ea;"></div>
<div style="position:absolute;left:631px;top:350px;width:67px;height:2px;background:#2cc3e4;"></div>
<div style="position:absolute;left:691.5px;top:344px;width:13px;height:13px;box-sizing:border-box;background:#fff;border:1px solid #b4b9c2;border-radius:7px;"></div>
<div class="inp" style="position:absolute;left:741px;top:340px;width:73px;height:22px;"></div>
<div style="position:absolute;left:797px;top:341px;width:1px;height:20px;background:#e9ebef;"></div>
<div style="position:absolute;left:798px;top:341px;width:15px;height:20px;background:#fafbfc;border-radius:0 3px 3px 0;"></div>
<div style="position:absolute;left:798px;top:350.5px;width:15px;height:1px;background:#eceef1;"></div>
<svg style="position:absolute;left:801px;top:340px;" width="9" height="22" viewBox="0 0 9 22"><path d="M2.1 6.8L4.5 4.5L6.9 6.8M2.1 14.9L4.5 17.2L6.9 14.9" fill="none" stroke="#5a5f69" stroke-width="1.3"/></svg>
<span class="t" style="left:747.6px;top:341.5px;font-size:13px;letter-spacing:0.50px;color:#1e1e24;">30,00</span>
<div class="inp dis" style="position:absolute;left:631px;top:368px;width:89px;height:22px;"></div>
<div style="position:absolute;left:703px;top:369px;width:1px;height:20px;background:#cfd4da;"></div>
<div style="position:absolute;left:704px;top:369px;width:15px;height:20px;background:#f1f3f5;border-radius:0 3px 3px 0;"></div>
<div style="position:absolute;left:704px;top:378.5px;width:15px;height:1px;background:#d5d9df;"></div>
<svg style="position:absolute;left:707px;top:368px;" width="9" height="22" viewBox="0 0 9 22"><path d="M2.1 6.8L4.5 4.5L6.9 6.8M2.1 14.9L4.5 17.2L6.9 14.9" fill="none" stroke="#5a5f69" stroke-width="1.3"/></svg>
<span class="t" style="left:637.6px;top:369.5px;font-size:13px;letter-spacing:0.67px;color:#7b808a;">1,00</span>
<div class="inp dis" style="position:absolute;left:726px;top:368px;width:88px;height:22px;"></div>
<div style="position:absolute;left:797px;top:369px;width:1px;height:20px;background:#cfd4da;"></div>
<div style="position:absolute;left:798px;top:369px;width:15px;height:20px;background:#f1f3f5;border-radius:0 3px 3px 0;"></div>
<div style="position:absolute;left:798px;top:378.5px;width:15px;height:1px;background:#d5d9df;"></div>
<svg style="position:absolute;left:801px;top:368px;" width="9" height="22" viewBox="0 0 9 22"><path d="M2.1 6.8L4.5 4.5L6.9 6.8M2.1 14.9L4.5 17.2L6.9 14.9" fill="none" stroke="#5a5f69" stroke-width="1.3"/></svg>
<span class="t" style="left:732.6px;top:369.5px;font-size:13px;letter-spacing:0.67px;color:#7b808a;">3,00</span>
<div style="position:absolute;left:821px;top:373px;width:13px;height:13px;box-sizing:border-box;background:#fff;border:1.4px solid #3c4048;border-radius:3px;"></div>
<div style="position:absolute;left:632px;top:398px;width:13px;height:13px;box-sizing:border-box;background:#fff;border:1.4px solid #3c4048;border-radius:3px;"></div>
<div class="inp" style="position:absolute;left:631px;top:420px;width:89px;height:22px;"></div>
<div style="position:absolute;left:703px;top:421px;width:1px;height:20px;background:#e9ebef;"></div>
<div style="position:absolute;left:704px;top:421px;width:15px;height:20px;background:#fafbfc;border-radius:0 3px 3px 0;"></div>
<div style="position:absolute;left:704px;top:430.5px;width:15px;height:1px;background:#eceef1;"></div>
<svg style="position:absolute;left:707px;top:420px;" width="9" height="22" viewBox="0 0 9 22"><path d="M2.1 6.8L4.5 4.5L6.9 6.8M2.1 14.9L4.5 17.2L6.9 14.9" fill="none" stroke="#5a5f69" stroke-width="1.3"/></svg>
<span class="t" style="left:637.6px;top:421.5px;font-size:13px;letter-spacing:0.00px;color:#1e1e24;">1</span>
<div class="inp" style="position:absolute;left:726px;top:420px;width:88px;height:22px;"></div>
<div style="position:absolute;left:797px;top:421px;width:1px;height:20px;background:#e9ebef;"></div>
<div style="position:absolute;left:798px;top:421px;width:15px;height:20px;background:#fafbfc;border-radius:0 3px 3px 0;"></div>
<div style="position:absolute;left:798px;top:430.5px;width:15px;height:1px;background:#eceef1;"></div>
<svg style="position:absolute;left:801px;top:420px;" width="9" height="22" viewBox="0 0 9 22"><path d="M2.1 6.8L4.5 4.5L6.9 6.8M2.1 14.9L4.5 17.2L6.9 14.9" fill="none" stroke="#5a5f69" stroke-width="1.3"/></svg>
<span class="t" style="left:732.6px;top:421.5px;font-size:13px;letter-spacing:0.00px;color:#1e1e24;">1</span>
<div class="inp" style="position:absolute;left:631px;top:448px;width:183px;height:22px;"></div>
<span class="t" style="left:636px;top:449.5px;font-size:13px;letter-spacing:0.08px;color:#1e1e24;">Per pole</span>
<svg style="position:absolute;left:797px;top:452px" width="16" height="16" viewBox="0 0 16 16"><path d="M4.720000000000001 6.86L8 10.14L11.28 6.86" fill="none" stroke="#333842" stroke-width="1.90" stroke-linecap="round" stroke-linejoin="round"/></svg>
<div class="inp" style="position:absolute;left:631px;top:476px;width:183px;height:22px;"></div>
<div style="position:absolute;left:797px;top:477px;width:1px;height:20px;background:#e9ebef;"></div>
<div style="position:absolute;left:798px;top:477px;width:15px;height:20px;background:#fafbfc;border-radius:0 3px 3px 0;"></div>
<div style="position:absolute;left:798px;top:486.5px;width:15px;height:1px;background:#eceef1;"></div>
<svg style="position:absolute;left:801px;top:476px;" width="9" height="22" viewBox="0 0 9 22"><path d="M2.1 6.8L4.5 4.5L6.9 6.8M2.1 14.9L4.5 17.2L6.9 14.9" fill="none" stroke="#5a5f69" stroke-width="1.3"/></svg>
<span class="t" style="left:637.6px;top:477.5px;font-size:13px;letter-spacing:0.67px;color:#1e1e24;">0,00</span>
<span class="t" style="left:470px;top:539.5px;font-size:13px;letter-spacing:-0.05px;color:#1e1e24;">Decal area:</span>
<span class="t" style="left:470px;top:570.5px;font-size:13px;letter-spacing:0.45px;color:#1e1e24;">Field orientation (°):</span>
<span class="t" style="left:470px;top:598.5px;font-size:13px;letter-spacing:0.10px;color:#1e1e24;">Field spacing (m):</span>
<span class="t" style="left:470px;top:626.5px;font-size:13px;letter-spacing:0.43px;color:#1e1e24;">Field offset (m):</span>
<span class="t" style="left:470px;top:654.5px;font-size:13px;letter-spacing:0.14px;color:#1e1e24;">Field shearing (m):</span>
<span class="t" style="left:470px;top:680.5px;font-size:13px;letter-spacing:0.29px;color:#1e1e24;">Align on ground:</span>
<div class="inp" style="position:absolute;left:605px;top:539px;width:163px;height:22px;"></div>
<svg style="position:absolute;left:773.0px;top:533.0px;overflow:visible" width="32" height="32" viewBox="0 0 32 32"><defs><linearGradient id="ptrg3" x1="0" y1="0" x2="1" y2="1"><stop offset="0.2" stop-color="#ffffff"/><stop offset="1" stop-color="#cfd0d6"/></linearGradient></defs><path d="M6.7 6.7L26.3 14.7L17.3 17.3L14.7 26.1Z" fill="url(#ptrg3)" stroke="#3a3e47" stroke-width="1.5" stroke-linejoin="round"/></svg>
<svg style="position:absolute;left:811.6px;top:533.4px;overflow:visible" width="32" height="32" viewBox="0 0 32 32"><rect x="8.2" y="8.2" width="15.6" height="15.6" rx="3.2" fill="#f1f1f2" stroke="#8d9096" stroke-width="1.3"/><path d="M13.6 6.6V9.8M18.4 6.6V9.8M13.6 22.2V25.4M18.4 22.2V25.4M6.6 13.6H9.8M6.6 18.4H9.8M22.2 13.6H25.4M22.2 18.4H25.4" stroke="#8d9096" stroke-width="1.3"/></svg>
<div style="position:absolute;left:605px;top:579px;width:152px;height:1px;background:#e3e6ea;"></div>
<div style="position:absolute;left:605px;top:579px;width:76px;height:2px;background:#2cc3e4;"></div>
<div style="position:absolute;left:674.5px;top:573px;width:13px;height:13px;box-sizing:border-box;background:#fff;border:1px solid #b4b9c2;border-radius:7px;"></div>
<div class="inp" style="position:absolute;left:763px;top:569px;width:81px;height:22px;"></div>
<div style="position:absolute;left:827px;top:570px;width:1px;height:20px;background:#e9ebef;"></div>
<div style="position:absolute;left:828px;top:570px;width:15px;height:20px;background:#fafbfc;border-radius:0 3px 3px 0;"></div>
<div style="position:absolute;left:828px;top:579.5px;width:15px;height:1px;background:#eceef1;"></div>
<svg style="position:absolute;left:831px;top:569px;" width="9" height="22" viewBox="0 0 9 22"><path d="M2.1 6.8L4.5 4.5L6.9 6.8M2.1 14.9L4.5 17.2L6.9 14.9" fill="none" stroke="#5a5f69" stroke-width="1.3"/></svg>
<span class="t" style="left:769.6px;top:570.5px;font-size:13px;letter-spacing:0.67px;color:#1e1e24;">0,00</span>
<div class="inp" style="position:absolute;left:605px;top:597px;width:117px;height:22px;"></div>
<div style="position:absolute;left:705px;top:598px;width:1px;height:20px;background:#e9ebef;"></div>
<div style="position:absolute;left:706px;top:598px;width:15px;height:20px;background:#fafbfc;border-radius:0 3px 3px 0;"></div>
<div style="position:absolute;left:706px;top:607.5px;width:15px;height:1px;background:#eceef1;"></div>
<svg style="position:absolute;left:709px;top:597px;" width="9" height="22" viewBox="0 0 9 22"><path d="M2.1 6.8L4.5 4.5L6.9 6.8M2.1 14.9L4.5 17.2L6.9 14.9" fill="none" stroke="#5a5f69" stroke-width="1.3"/></svg>
<span class="t" style="left:611.6px;top:598.5px;font-size:13px;letter-spacing:0.67px;color:#1e1e24;">1,00</span>
<div class="inp" style="position:absolute;left:728px;top:597px;width:116px;height:22px;"></div>
<div style="position:absolute;left:827px;top:598px;width:1px;height:20px;background:#e9ebef;"></div>
<div style="position:absolute;left:828px;top:598px;width:15px;height:20px;background:#fafbfc;border-radius:0 3px 3px 0;"></div>
<div style="position:absolute;left:828px;top:607.5px;width:15px;height:1px;background:#eceef1;"></div>
<svg style="position:absolute;left:831px;top:597px;" width="9" height="22" viewBox="0 0 9 22"><path d="M2.1 6.8L4.5 4.5L6.9 6.8M2.1 14.9L4.5 17.2L6.9 14.9" fill="none" stroke="#5a5f69" stroke-width="1.3"/></svg>
<span class="t" style="left:734.6px;top:598.5px;font-size:13px;letter-spacing:0.67px;color:#1e1e24;">0,20</span>
<div class="inp" style="position:absolute;left:605px;top:625px;width:117px;height:22px;"></div>
<div style="position:absolute;left:705px;top:626px;width:1px;height:20px;background:#e9ebef;"></div>
<div style="position:absolute;left:706px;top:626px;width:15px;height:20px;background:#fafbfc;border-radius:0 3px 3px 0;"></div>
<div style="position:absolute;left:706px;top:635.5px;width:15px;height:1px;background:#eceef1;"></div>
<svg style="position:absolute;left:709px;top:625px;" width="9" height="22" viewBox="0 0 9 22"><path d="M2.1 6.8L4.5 4.5L6.9 6.8M2.1 14.9L4.5 17.2L6.9 14.9" fill="none" stroke="#5a5f69" stroke-width="1.3"/></svg>
<span class="t" style="left:611.6px;top:626.5px;font-size:13px;letter-spacing:0.67px;color:#1e1e24;">0,00</span>
<div class="inp" style="position:absolute;left:728px;top:625px;width:116px;height:22px;"></div>
<div style="position:absolute;left:827px;top:626px;width:1px;height:20px;background:#e9ebef;"></div>
<div style="position:absolute;left:828px;top:626px;width:15px;height:20px;background:#fafbfc;border-radius:0 3px 3px 0;"></div>
<div style="position:absolute;left:828px;top:635.5px;width:15px;height:1px;background:#eceef1;"></div>
<svg style="position:absolute;left:831px;top:625px;" width="9" height="22" viewBox="0 0 9 22"><path d="M2.1 6.8L4.5 4.5L6.9 6.8M2.1 14.9L4.5 17.2L6.9 14.9" fill="none" stroke="#5a5f69" stroke-width="1.3"/></svg>
<span class="t" style="left:734.6px;top:626.5px;font-size:13px;letter-spacing:0.67px;color:#1e1e24;">0,00</span>
<div class="inp" style="position:absolute;left:605px;top:653px;width:239px;height:22px;"></div>
<div style="position:absolute;left:827px;top:654px;width:1px;height:20px;background:#e9ebef;"></div>
<div style="position:absolute;left:828px;top:654px;width:15px;height:20px;background:#fafbfc;border-radius:0 3px 3px 0;"></div>
<div style="position:absolute;left:828px;top:663.5px;width:15px;height:1px;background:#eceef1;"></div>
<svg style="position:absolute;left:831px;top:653px;" width="9" height="22" viewBox="0 0 9 22"><path d="M2.1 6.8L4.5 4.5L6.9 6.8M2.1 14.9L4.5 17.2L6.9 14.9" fill="none" stroke="#5a5f69" stroke-width="1.3"/></svg>
<span class="t" style="left:611.6px;top:654.5px;font-size:13px;letter-spacing:0.67px;color:#1e1e24;">0,00</span>
<div style="position:absolute;left:607px;top:684px;width:13px;height:13px;background:#3a9ae4;border-radius:3px;"></div>
<svg style="position:absolute;left:607px;top:684px;" width="13" height="13" viewBox="0 0 13 13"><path d="M3 6.6L5.6 9.2L10 3.8" fill="none" stroke="#fff" stroke-width="1.7"/></svg>
<div style="position:absolute;left:448px;top:715px;width:413px;height:1px;background:#eceef2;"></div>
<svg style="position:absolute;left:448px;top:722px;" width="64" height="30" viewBox="0 0 64 30"><path d="M5.2 5.3L24.6 5.3L26.0 19.6L3.6 19.6Z" fill="#a8ebf5" stroke="#7d8a94" stroke-width="1" stroke-linejoin="round"/><path d="M10.0 5.3L9.2 19.6M14.9 5.3L14.8 19.6M19.8 5.3L20.4 19.6M4.7 10.1L25.1 10.1M4.1 14.8L25.5 14.8" stroke="#6ab6c7" stroke-width="1.1" fill="none"/><rect x="14.4" y="16.0" width="12.8" height="9.8" rx="1" fill="#c9cacd"/><rect x="13.8" y="15.2" width="12.8" height="9.8" rx="1" fill="#fbfbfb" stroke="#8e9094" stroke-width="1"/><path d="M21.2 15.6H25.4L23.3 18.8Z" fill="#25b8d4"/><path d="M16.5 17.6h1.5M16.5 20.3h1.5M19.4 20.3h1.5M22.5 20.3h1.5M16.5 22.9h1.5M19.4 22.9h1.5M22.5 22.9h1.5" stroke="#23262d" stroke-width="1.3"/><path d="M35.6 5.3L51.0 5.3L52.0 16.6L34.5 16.6Z" fill="#adbbee" stroke="#7d8a94" stroke-width="1" stroke-linejoin="round"/><path d="M39.5 5.3L38.9 16.6M43.3 5.3L43.2 16.6M47.2 5.3L47.6 16.6M35.2 9.1L51.3 9.1M34.9 12.8L51.7 12.8" stroke="#8597d8" stroke-width="1.1" fill="none"/><path d="M40.0 9.4L55.3 9.4L56.3 20.4L38.9 20.4Z" fill="#a8ebf5" stroke="#7d8a94" stroke-width="1" stroke-linejoin="round"/><path d="M43.8 9.4L43.2 20.4M47.7 9.4L47.6 20.4M51.5 9.4L52.0 20.4M39.6 13.1L55.6 13.1M39.3 16.7L56.0 16.7" stroke="#6ab6c7" stroke-width="1.1" fill="none"/><rect x="47.6" y="16.0" width="10.8" height="10.0" rx="1" fill="#c9cacd"/><rect x="47.0" y="15.2" width="10.8" height="10.0" rx="1" fill="#fbfbfb" stroke="#8e9094" stroke-width="1"/><path d="M52.4 15.6H56.6L54.5 18.8Z" fill="#25b8d4"/><path d="M49.7 17.6h1.5M49.7 20.3h1.5M52.6 20.3h1.5M55.7 20.3h1.5M49.7 22.9h1.5M52.6 22.9h1.5M55.7 22.9h1.5" stroke="#23262d" stroke-width="1.3"/></svg>
<svg style="position:absolute;left:836.0px;top:720.0px;overflow:visible" width="32" height="32" viewBox="0 0 32 32"><circle cx="16" cy="16" r="8.6" fill="#3bd2ec" stroke="#1f3b46" stroke-width="1.4"/><text x="16" y="20.4" text-anchor="middle" font-family="Liberation Sans" font-size="12" font-weight="bold" fill="#16333d">?</text></svg>
</body></html>
